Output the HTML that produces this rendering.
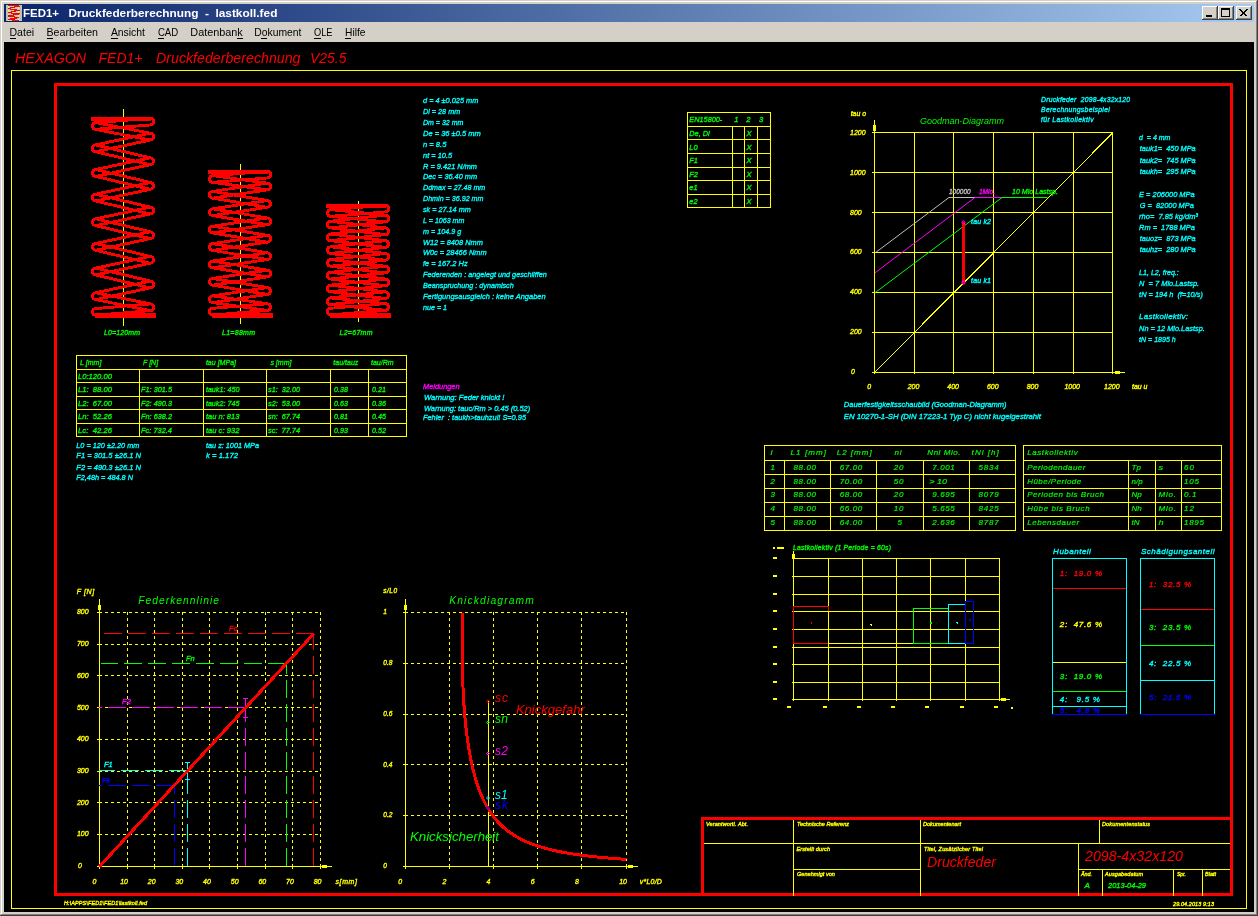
<!DOCTYPE html>
<html><head><meta charset="utf-8"><title>FED1+</title>
<style>
html,body{margin:0;padding:0;background:#d4d0c8;overflow:hidden}
svg{display:block;position:absolute;left:0;top:0;will-change:transform}
svg text{font-family:"Liberation Sans",sans-serif;font-style:italic;white-space:pre}
svg line,svg rect{shape-rendering:crispEdges}
</style></head><body>
<svg width="1258" height="916" viewBox="0 0 1258 916">
<rect x="0" y="0" width="1258" height="916" fill="#d4d0c8"/>
<rect x="1" y="1" width="1256" height="1" fill="#ffffff"/>
<rect x="1" y="1" width="1" height="913" fill="#ffffff"/>
<rect x="1256" y="1" width="1" height="914" fill="#808080"/>
<rect x="1" y="914" width="1256" height="1" fill="#808080"/>
<rect x="1257" y="0" width="1" height="916" fill="#404040"/>
<rect x="0" y="915" width="1258" height="1" fill="#404040"/>
<defs><linearGradient id="tg" x1="0" x2="1" y1="0" y2="0"><stop offset="0" stop-color="#0a246a"/><stop offset="1" stop-color="#a6caf0"/></linearGradient></defs>
<rect x="4" y="4" width="1250" height="18" fill="url(#tg)"/>
<rect x="6" y="5" width="16" height="16" fill="#c0c0c0"/>
<rect x="8" y="5" width="12" height="16" fill="#b0d0d8"/>
<rect x="8" y="5" width="11" height="1" fill="#ff0000"/>
<rect x="8" y="6" width="1" height="1" fill="#ffff00"/>
<rect x="13" y="6" width="1" height="1" fill="#ffff00"/>
<rect x="14" y="6" width="6" height="1" fill="#ff0000"/>
<rect x="8" y="7" width="1" height="1" fill="#ffff00"/>
<rect x="10" y="7" width="5" height="1" fill="#ff0000"/>
<rect x="18" y="7" width="1" height="1" fill="#ffff00"/>
<rect x="8" y="8" width="3" height="1" fill="#ff0000"/>
<rect x="13" y="8" width="1" height="1" fill="#ffff00"/>
<rect x="18" y="8" width="1" height="1" fill="#ffff00"/>
<rect x="10" y="9" width="7" height="1" fill="#ff0000"/>
<rect x="8" y="10" width="1" height="1" fill="#ffff00"/>
<rect x="13" y="10" width="1" height="1" fill="#ffff00"/>
<rect x="14" y="10" width="6" height="1" fill="#ff0000"/>
<rect x="8" y="11" width="1" height="1" fill="#ffff00"/>
<rect x="11" y="11" width="5" height="1" fill="#ff0000"/>
<rect x="18" y="11" width="1" height="1" fill="#ffff00"/>
<rect x="8" y="12" width="4" height="1" fill="#ff0000"/>
<rect x="13" y="12" width="1" height="1" fill="#ffff00"/>
<rect x="18" y="12" width="1" height="1" fill="#ffff00"/>
<rect x="11" y="13" width="9" height="1" fill="#ff0000"/>
<rect x="8" y="14" width="1" height="1" fill="#ffff00"/>
<rect x="13" y="14" width="6" height="1" fill="#ff0000"/>
<rect x="8" y="15" width="6" height="1" fill="#ff0000"/>
<rect x="18" y="15" width="1" height="1" fill="#ffff00"/>
<rect x="8" y="16" width="7" height="1" fill="#ff0000"/>
<rect x="18" y="16" width="1" height="1" fill="#ffff00"/>
<rect x="8" y="17" width="1" height="1" fill="#ffff00"/>
<rect x="13" y="17" width="1" height="1" fill="#ffff00"/>
<rect x="14" y="17" width="5" height="1" fill="#ff0000"/>
<rect x="10" y="18" width="7" height="1" fill="#ff0000"/>
<rect x="8" y="19" width="7" height="1" fill="#ff0000"/>
<rect x="18" y="19" width="1" height="1" fill="#ffff00"/>
<rect x="8" y="20" width="1" height="1" fill="#ffff00"/>
<rect x="12" y="20" width="7" height="1" fill="#ff0000"/>
<text x="23" y="17" fill="#ffffff" font-size="11" style="font-style:normal" font-weight="bold" textLength="36" lengthAdjust="spacingAndGlyphs" xml:space="preserve">FED1+</text>
<text x="68.4" y="17" fill="#ffffff" font-size="11" style="font-style:normal" font-weight="bold" textLength="130" lengthAdjust="spacingAndGlyphs" xml:space="preserve">Druckfederberechnung</text>
<text x="205" y="17" fill="#ffffff" font-size="11" style="font-style:normal" font-weight="bold" textLength="4" lengthAdjust="spacingAndGlyphs" xml:space="preserve">-</text>
<text x="215.4" y="17" fill="#ffffff" font-size="11" style="font-style:normal" font-weight="bold" textLength="62" lengthAdjust="spacingAndGlyphs" xml:space="preserve">lastkoll.fed</text>
<rect x="1202" y="6" width="16" height="14" fill="#404040"/>
<rect x="1202" y="6" width="15" height="13" fill="#ffffff"/>
<rect x="1203" y="7" width="14" height="12" fill="#808080"/>
<rect x="1203" y="7" width="13" height="11" fill="#d4d0c8"/>
<rect x="1218" y="6" width="16" height="14" fill="#404040"/>
<rect x="1218" y="6" width="15" height="13" fill="#ffffff"/>
<rect x="1219" y="7" width="14" height="12" fill="#808080"/>
<rect x="1219" y="7" width="13" height="11" fill="#d4d0c8"/>
<rect x="1236" y="6" width="16" height="14" fill="#404040"/>
<rect x="1236" y="6" width="15" height="13" fill="#ffffff"/>
<rect x="1237" y="7" width="14" height="12" fill="#808080"/>
<rect x="1237" y="7" width="13" height="11" fill="#d4d0c8"/>
<rect x="1206" y="15" width="6" height="2" fill="#000"/>
<rect x="1221.5" y="8.5" width="8" height="8" fill="none" stroke="#000" stroke-width="1"/>
<rect x="1221" y="8" width="9" height="2" fill="#000"/>
<path d="M1239.5 9.5 l7 7 M1240.5 9.5 l7 7 M1246.5 9.5 l-7 7 M1247.5 9.5 l-7 7" stroke="#000" stroke-width="1" fill="none" shape-rendering="crispEdges"/>
<text x="9.5" y="36" fill="#000000" font-size="11" style="font-style:normal" textLength="24.6" lengthAdjust="spacingAndGlyphs" xml:space="preserve">Datei</text>
<rect x="10" y="38" width="6" height="1" fill="#000"/>
<text x="46.5" y="36" fill="#000000" font-size="11" style="font-style:normal" textLength="51.5" lengthAdjust="spacingAndGlyphs" xml:space="preserve">Bearbeiten</text>
<rect x="47" y="38" width="6" height="1" fill="#000"/>
<text x="110.9" y="36" fill="#000000" font-size="11" style="font-style:normal" textLength="34.1" lengthAdjust="spacingAndGlyphs" xml:space="preserve">Ansicht</text>
<rect x="111" y="38" width="7" height="1" fill="#000"/>
<text x="157.9" y="36" fill="#000000" font-size="11" style="font-style:normal" textLength="20.3" lengthAdjust="spacingAndGlyphs" xml:space="preserve">CAD</text>
<rect x="158" y="38" width="6" height="1" fill="#000"/>
<text x="190.3" y="36" fill="#000000" font-size="11" style="font-style:normal" textLength="52.5" lengthAdjust="spacingAndGlyphs" xml:space="preserve">Datenbank</text>
<rect x="237" y="38" width="6" height="1" fill="#000"/>
<text x="254.3" y="36" fill="#000000" font-size="11" style="font-style:normal" textLength="47.2" lengthAdjust="spacingAndGlyphs" xml:space="preserve">Dokument</text>
<rect x="261" y="38" width="6" height="1" fill="#000"/>
<text x="314" y="36" fill="#000000" font-size="11" style="font-style:normal" textLength="18.5" lengthAdjust="spacingAndGlyphs" xml:space="preserve">OLE</text>
<rect x="314" y="38" width="7" height="1" fill="#000"/>
<text x="345" y="36" fill="#000000" font-size="11" style="font-style:normal" textLength="20.5" lengthAdjust="spacingAndGlyphs" xml:space="preserve">Hilfe</text>
<rect x="345" y="38" width="6" height="1" fill="#000"/>
<rect x="4" y="42" width="1250" height="870" fill="#000000"/>
<text x="15" y="63" fill="#ff0000" font-size="14" textLength="71" lengthAdjust="spacingAndGlyphs" xml:space="preserve">HEXAGON</text>
<text x="98.5" y="63" fill="#ff0000" font-size="14" textLength="44" lengthAdjust="spacingAndGlyphs" xml:space="preserve">FED1+</text>
<text x="156" y="63" fill="#ff0000" font-size="14" textLength="144.5" lengthAdjust="spacingAndGlyphs" xml:space="preserve">Druckfederberechnung</text>
<text x="310" y="63" fill="#ff0000" font-size="14" textLength="36.5" lengthAdjust="spacingAndGlyphs" xml:space="preserve">V25.5</text>
<rect x="11.5" y="70.5" width="1235" height="838" fill="none" stroke="#ffff00" stroke-width="1"/>
<rect x="55.5" y="84.5" width="1176" height="810" fill="none" stroke="#ff0000" stroke-width="3"/>
<text x="64" y="905" fill="#ffff00" font-size="5.5" textLength="83" lengthAdjust="spacing" stroke="#ffff00" stroke-width="0.35" xml:space="preserve">H:\APPS\FED1\FED1\lastkoll.fed</text>
<text x="1173" y="905.5" fill="#ffff00" font-size="5.5" textLength="41" lengthAdjust="spacing" stroke="#ffff00" stroke-width="0.35" xml:space="preserve">29.04.2013 9:13</text>
<line x1="123.5" y1="109" x2="123.5" y2="326" stroke="#ffff00" stroke-width="1"/>
<line x1="240.5" y1="164" x2="240.5" y2="324" stroke="#ffff00" stroke-width="1"/>
<line x1="358.5" y1="201" x2="358.5" y2="322" stroke="#ffff00" stroke-width="1"/>
<clipPath id="c123"><rect x="83" y="117" width="80" height="201.20000000000002"/></clipPath>
<g clip-path="url(#c123)"><path d="M149.93 118.28L95.53 122.68M150.47 124.92L96.07 129.32M96.44 122.73L150.84 133.35M95.16 129.27L149.56 139.89M149.50 133.37L95.10 145.08M150.90 139.88L96.50 151.59M96.57 145.10L150.97 158.02M95.03 151.58L149.43 164.50M149.50 158.01L95.10 169.72M150.90 164.52L96.50 176.23M96.57 169.74L150.97 182.66M95.03 176.22L149.43 189.14M149.50 182.65L95.10 194.37M150.90 189.16L96.50 200.88M96.57 194.38L150.97 207.31M95.03 200.86L149.43 213.78M149.50 207.29L95.10 219.01M150.90 213.80L96.50 225.52M96.57 219.02L150.97 231.95M95.03 225.50L149.43 238.43M149.50 231.93L95.10 243.65M150.90 238.44L96.50 250.16M96.57 243.66L150.97 256.59M95.03 250.14L149.43 263.07M149.50 256.57L95.10 268.29M150.90 263.08L96.50 274.80M96.57 268.31L150.97 281.23M95.03 274.78L149.43 287.71M149.50 281.21L95.10 292.93M150.90 287.72L96.50 299.44M96.47 292.92L150.87 304.04M95.13 299.45L149.53 310.56M149.92 303.98L95.52 308.58M150.48 310.62L96.08 315.22M150.33 118.27A3.33 3.33 0 0 1 150.47 124.92M95.53 122.68A3.33 3.33 0 0 0 95.16 129.27M150.84 133.35A3.33 3.33 0 0 1 150.90 139.88M95.10 145.08A3.33 3.33 0 0 0 95.03 151.58M150.97 158.02A3.33 3.33 0 0 1 150.90 164.52M95.10 169.72A3.33 3.33 0 0 0 95.03 176.22M150.97 182.66A3.33 3.33 0 0 1 150.90 189.16M95.10 194.37A3.33 3.33 0 0 0 95.03 200.86M150.97 207.31A3.33 3.33 0 0 1 150.90 213.80M95.10 219.01A3.33 3.33 0 0 0 95.03 225.50M150.97 231.95A3.33 3.33 0 0 1 150.90 238.44M95.10 243.65A3.33 3.33 0 0 0 95.03 250.14M150.97 256.59A3.33 3.33 0 0 1 150.90 263.08M95.10 268.29A3.33 3.33 0 0 0 95.03 274.78M150.97 281.23A3.33 3.33 0 0 1 150.90 287.72M95.10 292.93A3.33 3.33 0 0 0 95.13 299.45M150.87 304.04A3.33 3.33 0 0 1 150.48 310.62M95.52 308.58A3.33 3.33 0 0 0 95.59 315.22" fill="none" stroke="#ff0000" stroke-width="2.9" stroke-linecap="round" stroke-linejoin="round" shape-rendering="crispEdges"/>
<rect x="91" y="117" width="60" height="3.6" fill="#ff0000"/>
<rect x="95" y="313.0" width="61" height="5.2" fill="#ff0000"/>
</g>
<clipPath id="c240"><rect x="200" y="170" width="80" height="147.99999999999997"/></clipPath>
<g clip-path="url(#c240)"><path d="M266.93 171.28L212.53 175.68M267.47 177.92L213.07 182.32M213.26 175.70L267.66 183.21M212.34 182.30L266.74 189.80M266.70 183.21L212.30 191.49M267.70 189.80L213.30 198.07M213.35 191.50L267.75 200.63M212.25 198.07L266.65 207.20M266.70 200.62L212.30 208.90M267.70 207.21L213.30 215.49M213.35 208.91L267.75 218.04M212.25 215.48L266.65 224.61M266.70 218.03L212.30 226.31M267.70 224.62L213.30 232.90M213.35 226.32L267.75 235.45M212.25 232.89L266.65 242.02M266.70 235.44L212.30 243.72M267.70 242.03L213.30 250.31M213.35 243.73L267.75 252.86M212.25 250.30L266.65 259.43M266.70 252.86L212.30 261.13M267.70 259.44L213.30 267.72M213.35 261.14L267.75 270.27M212.25 267.71L266.65 276.84M266.70 270.27L212.30 278.54M267.70 276.85L213.30 285.13M213.35 278.55L267.75 287.68M212.25 285.12L266.65 294.25M266.70 287.68L212.30 295.96M267.70 294.26L213.30 302.54M213.28 295.95L267.68 303.80M212.32 302.54L266.72 310.40M266.92 303.78L212.52 308.38M267.48 310.42L213.08 315.02M267.33 171.27A3.33 3.33 0 0 1 267.47 177.92M212.53 175.68A3.33 3.33 0 0 0 212.34 182.30M267.66 183.21A3.33 3.33 0 0 1 267.70 189.80M212.30 191.49A3.33 3.33 0 0 0 212.25 198.07M267.75 200.63A3.33 3.33 0 0 1 267.70 207.21M212.30 208.90A3.33 3.33 0 0 0 212.25 215.48M267.75 218.04A3.33 3.33 0 0 1 267.70 224.62M212.30 226.31A3.33 3.33 0 0 0 212.25 232.89M267.75 235.45A3.33 3.33 0 0 1 267.70 242.03M212.30 243.72A3.33 3.33 0 0 0 212.25 250.30M267.75 252.86A3.33 3.33 0 0 1 267.70 259.44M212.30 261.13A3.33 3.33 0 0 0 212.25 267.71M267.75 270.27A3.33 3.33 0 0 1 267.70 276.85M212.30 278.54A3.33 3.33 0 0 0 212.25 285.12M267.75 287.68A3.33 3.33 0 0 1 267.70 294.26M212.30 295.96A3.33 3.33 0 0 0 212.32 302.54M267.68 303.80A3.33 3.33 0 0 1 267.48 310.42M212.52 308.38A3.33 3.33 0 0 0 212.59 315.02" fill="none" stroke="#ff0000" stroke-width="2.9" stroke-linecap="round" stroke-linejoin="round" shape-rendering="crispEdges"/>
<rect x="208" y="170" width="60" height="3.6" fill="#ff0000"/>
<rect x="212" y="312.79999999999995" width="61" height="5.2" fill="#ff0000"/>
</g>
<clipPath id="c358"><rect x="318" y="204" width="80" height="113.9"/></clipPath>
<g clip-path="url(#c358)"><path d="M384.93 205.28L330.53 209.68M385.47 211.92L331.07 216.32M331.14 209.69L385.54 215.19M330.46 216.31L384.86 221.82M384.83 215.20L330.43 221.27M385.57 221.82L331.17 227.89M331.21 221.28L385.61 227.98M330.39 227.89L384.79 234.59M384.83 227.97L330.43 234.05M385.57 234.59L331.17 240.67M331.21 234.05L385.61 240.75M330.39 240.66L384.79 247.36M384.83 240.75L330.43 246.82M385.57 247.37L331.17 253.44M331.21 246.83L385.61 253.53M330.39 253.44L384.79 260.14M384.83 253.53L330.43 259.60M385.57 260.14L331.17 266.22M331.21 259.60L385.61 266.31M330.39 266.21L384.79 272.92M384.83 266.30L330.43 272.38M385.57 272.92L331.17 279.00M331.21 272.38L385.61 279.08M330.39 278.99L384.79 285.69M384.83 279.08L330.43 285.15M385.57 285.70L331.17 291.77M331.21 285.16L385.61 291.86M330.39 291.77L384.79 298.47M384.83 291.85L330.43 297.93M385.57 298.47L331.17 304.55M331.15 297.93L385.55 303.69M330.45 304.55L384.85 310.31M384.92 303.68L330.52 308.28M385.48 310.32L331.08 314.92M385.33 205.27A3.33 3.33 0 0 1 385.47 211.92M330.53 209.68A3.33 3.33 0 0 0 330.46 216.31M385.54 215.19A3.33 3.33 0 0 1 385.57 221.82M330.43 221.27A3.33 3.33 0 0 0 330.39 227.89M385.61 227.98A3.33 3.33 0 0 1 385.57 234.59M330.43 234.05A3.33 3.33 0 0 0 330.39 240.66M385.61 240.75A3.33 3.33 0 0 1 385.57 247.37M330.43 246.82A3.33 3.33 0 0 0 330.39 253.44M385.61 253.53A3.33 3.33 0 0 1 385.57 260.14M330.43 259.60A3.33 3.33 0 0 0 330.39 266.21M385.61 266.31A3.33 3.33 0 0 1 385.57 272.92M330.43 272.38A3.33 3.33 0 0 0 330.39 278.99M385.61 279.08A3.33 3.33 0 0 1 385.57 285.70M330.43 285.15A3.33 3.33 0 0 0 330.39 291.77M385.61 291.86A3.33 3.33 0 0 1 385.57 298.47M330.43 297.93A3.33 3.33 0 0 0 330.45 304.55M385.55 303.69A3.33 3.33 0 0 1 385.48 310.32M330.52 308.28A3.33 3.33 0 0 0 330.59 314.92" fill="none" stroke="#ff0000" stroke-width="2.9" stroke-linecap="round" stroke-linejoin="round" shape-rendering="crispEdges"/>
<rect x="326" y="204" width="60" height="3.6" fill="#ff0000"/>
<rect x="330" y="312.7" width="61" height="5.2" fill="#ff0000"/>
</g>
<text x="104" y="334.5" fill="#00ff00" font-size="7" textLength="36" lengthAdjust="spacing" stroke="#00ff00" stroke-width="0.35" xml:space="preserve">L0=120mm</text>
<text x="222" y="334.5" fill="#00ff00" font-size="7" textLength="33" lengthAdjust="spacing" stroke="#00ff00" stroke-width="0.35" xml:space="preserve">L1=88mm</text>
<text x="339.5" y="334.5" fill="#00ff00" font-size="7" textLength="33" lengthAdjust="spacing" stroke="#00ff00" stroke-width="0.35" xml:space="preserve">L2=67mm</text>
<text x="423" y="103.3" fill="#00ffff" font-size="8" textLength="55.3" lengthAdjust="spacingAndGlyphs" stroke="#00ffff" stroke-width="0.35" xml:space="preserve">d = 4 ±0.025 mm</text>
<text x="423" y="114.2" fill="#00ffff" font-size="8" textLength="37.2" lengthAdjust="spacingAndGlyphs" stroke="#00ffff" stroke-width="0.35" xml:space="preserve">Di = 28 mm</text>
<text x="423" y="125.0" fill="#00ffff" font-size="8" textLength="40.4" lengthAdjust="spacingAndGlyphs" stroke="#00ffff" stroke-width="0.35" xml:space="preserve">Dm = 32 mm</text>
<text x="423" y="135.9" fill="#00ffff" font-size="8" textLength="57.8" lengthAdjust="spacingAndGlyphs" stroke="#00ffff" stroke-width="0.35" xml:space="preserve">De = 36 ±0.5 mm</text>
<text x="423" y="146.7" fill="#00ffff" font-size="8" textLength="23.4" lengthAdjust="spacingAndGlyphs" stroke="#00ffff" stroke-width="0.35" xml:space="preserve">n = 8.5</text>
<text x="423" y="157.6" fill="#00ffff" font-size="8" textLength="29.1" lengthAdjust="spacingAndGlyphs" stroke="#00ffff" stroke-width="0.35" xml:space="preserve">nt = 10.5</text>
<text x="423" y="168.5" fill="#00ffff" font-size="8" textLength="54" lengthAdjust="spacingAndGlyphs" stroke="#00ffff" stroke-width="0.35" xml:space="preserve">R = 9.421 N/mm</text>
<text x="423" y="179.3" fill="#00ffff" font-size="8" textLength="54" lengthAdjust="spacingAndGlyphs" stroke="#00ffff" stroke-width="0.35" xml:space="preserve">Dec = 36.40 mm</text>
<text x="423" y="190.2" fill="#00ffff" font-size="8" textLength="62.3" lengthAdjust="spacingAndGlyphs" stroke="#00ffff" stroke-width="0.35" xml:space="preserve">Ddmax = 27.48 mm</text>
<text x="423" y="201.0" fill="#00ffff" font-size="8" textLength="60.5" lengthAdjust="spacingAndGlyphs" stroke="#00ffff" stroke-width="0.35" xml:space="preserve">Dhmin = 36.92 mm</text>
<text x="423" y="211.9" fill="#00ffff" font-size="8" textLength="47.7" lengthAdjust="spacingAndGlyphs" stroke="#00ffff" stroke-width="0.35" xml:space="preserve">sk = 27.14 mm</text>
<text x="423" y="222.8" fill="#00ffff" font-size="8" textLength="41.4" lengthAdjust="spacingAndGlyphs" stroke="#00ffff" stroke-width="0.35" xml:space="preserve">L = 1063 mm</text>
<text x="423" y="233.6" fill="#00ffff" font-size="8" textLength="38.2" lengthAdjust="spacingAndGlyphs" stroke="#00ffff" stroke-width="0.35" xml:space="preserve">m = 104.9 g</text>
<text x="423" y="244.5" fill="#00ffff" font-size="8" textLength="59.8" lengthAdjust="spacingAndGlyphs" stroke="#00ffff" stroke-width="0.35" xml:space="preserve">W12 = 8408 Nmm</text>
<text x="423" y="255.3" fill="#00ffff" font-size="8" textLength="63.6" lengthAdjust="spacingAndGlyphs" stroke="#00ffff" stroke-width="0.35" xml:space="preserve">W0c = 28466 Nmm</text>
<text x="423" y="266.2" fill="#00ffff" font-size="8" textLength="44.7" lengthAdjust="spacingAndGlyphs" stroke="#00ffff" stroke-width="0.35" xml:space="preserve">fe = 167.2 Hz</text>
<text x="423" y="277.1" fill="#00ffff" font-size="8" textLength="123.8" lengthAdjust="spacingAndGlyphs" stroke="#00ffff" stroke-width="0.35" xml:space="preserve">Federenden : angelegt und geschliffen</text>
<text x="423" y="287.9" fill="#00ffff" font-size="8" textLength="90.7" lengthAdjust="spacingAndGlyphs" stroke="#00ffff" stroke-width="0.35" xml:space="preserve">Beanspruchung : dynamisch</text>
<text x="423" y="298.8" fill="#00ffff" font-size="8" textLength="122.6" lengthAdjust="spacingAndGlyphs" stroke="#00ffff" stroke-width="0.35" xml:space="preserve">Fertigungsausgleich : keine Angaben</text>
<text x="423" y="309.6" fill="#00ffff" font-size="8" textLength="24.1" lengthAdjust="spacingAndGlyphs" stroke="#00ffff" stroke-width="0.35" xml:space="preserve">nue = 1</text>
<line x1="687" y1="112.5" x2="771" y2="112.5" stroke="#ffff00" stroke-width="1"/>
<line x1="687" y1="126.5" x2="771" y2="126.5" stroke="#ffff00" stroke-width="1"/>
<line x1="687" y1="139.5" x2="771" y2="139.5" stroke="#ffff00" stroke-width="1"/>
<line x1="687" y1="153.5" x2="771" y2="153.5" stroke="#ffff00" stroke-width="1"/>
<line x1="687" y1="167.5" x2="771" y2="167.5" stroke="#ffff00" stroke-width="1"/>
<line x1="687" y1="180.5" x2="771" y2="180.5" stroke="#ffff00" stroke-width="1"/>
<line x1="687" y1="194.5" x2="771" y2="194.5" stroke="#ffff00" stroke-width="1"/>
<line x1="687" y1="207.5" x2="771" y2="207.5" stroke="#ffff00" stroke-width="1"/>
<line x1="687.5" y1="112" x2="687.5" y2="208" stroke="#ffff00" stroke-width="1"/>
<line x1="732.5" y1="126" x2="732.5" y2="208" stroke="#ffff00" stroke-width="1"/>
<line x1="744.5" y1="126" x2="744.5" y2="208" stroke="#ffff00" stroke-width="1"/>
<line x1="757.5" y1="126" x2="757.5" y2="208" stroke="#ffff00" stroke-width="1"/>
<line x1="770.5" y1="112" x2="770.5" y2="208" stroke="#ffff00" stroke-width="1"/>
<text x="689.3" y="122" fill="#00ff00" font-size="8" textLength="33" lengthAdjust="spacingAndGlyphs" stroke="#00ff00" stroke-width="0.35" xml:space="preserve">EN15800-</text>
<text x="734.2" y="122" fill="#00ff00" font-size="8" textLength="4.23" lengthAdjust="spacingAndGlyphs" stroke="#00ff00" stroke-width="0.35" xml:space="preserve">1</text>
<text x="746.2" y="122" fill="#00ff00" font-size="8" textLength="4.23" lengthAdjust="spacingAndGlyphs" stroke="#00ff00" stroke-width="0.35" xml:space="preserve">2</text>
<text x="759" y="122" fill="#00ff00" font-size="8" textLength="4.23" lengthAdjust="spacingAndGlyphs" stroke="#00ff00" stroke-width="0.35" xml:space="preserve">3</text>
<text x="689.3" y="135.6" fill="#00ff00" font-size="8" textLength="20.45" lengthAdjust="spacingAndGlyphs" stroke="#00ff00" stroke-width="0.35" xml:space="preserve">De, Di</text>
<text x="746.4" y="135.6" fill="#00ff00" font-size="8" textLength="5.07" lengthAdjust="spacingAndGlyphs" stroke="#00ff00" stroke-width="0.35" xml:space="preserve">X</text>
<text x="689.3" y="149.8" fill="#00ff00" font-size="8" textLength="8.19" lengthAdjust="spacingAndGlyphs" stroke="#00ff00" stroke-width="0.35" xml:space="preserve">L0</text>
<text x="746.4" y="149.8" fill="#00ff00" font-size="8" textLength="5.07" lengthAdjust="spacingAndGlyphs" stroke="#00ff00" stroke-width="0.35" xml:space="preserve">X</text>
<text x="689.3" y="162.9" fill="#00ff00" font-size="8" textLength="8.59" lengthAdjust="spacingAndGlyphs" stroke="#00ff00" stroke-width="0.35" xml:space="preserve">F1</text>
<text x="746.4" y="162.9" fill="#00ff00" font-size="8" textLength="5.07" lengthAdjust="spacingAndGlyphs" stroke="#00ff00" stroke-width="0.35" xml:space="preserve">X</text>
<text x="689.3" y="176.6" fill="#00ff00" font-size="8" textLength="8.59" lengthAdjust="spacingAndGlyphs" stroke="#00ff00" stroke-width="0.35" xml:space="preserve">F2</text>
<text x="746.4" y="176.6" fill="#00ff00" font-size="8" textLength="5.07" lengthAdjust="spacingAndGlyphs" stroke="#00ff00" stroke-width="0.35" xml:space="preserve">X</text>
<text x="689.3" y="189.7" fill="#00ff00" font-size="8" textLength="8.19" lengthAdjust="spacingAndGlyphs" stroke="#00ff00" stroke-width="0.35" xml:space="preserve">e1</text>
<text x="746.4" y="189.7" fill="#00ff00" font-size="8" textLength="5.07" lengthAdjust="spacingAndGlyphs" stroke="#00ff00" stroke-width="0.35" xml:space="preserve">X</text>
<text x="689.3" y="203.8" fill="#00ff00" font-size="8" textLength="8.19" lengthAdjust="spacingAndGlyphs" stroke="#00ff00" stroke-width="0.35" xml:space="preserve">e2</text>
<text x="746.4" y="203.8" fill="#00ff00" font-size="8" textLength="5.07" lengthAdjust="spacingAndGlyphs" stroke="#00ff00" stroke-width="0.35" xml:space="preserve">X</text>
<line x1="76" y1="355.5" x2="407" y2="355.5" stroke="#ffff00" stroke-width="1"/>
<line x1="76" y1="369.5" x2="407" y2="369.5" stroke="#ffff00" stroke-width="1"/>
<line x1="76" y1="382.5" x2="407" y2="382.5" stroke="#ffff00" stroke-width="1"/>
<line x1="76" y1="396.5" x2="407" y2="396.5" stroke="#ffff00" stroke-width="1"/>
<line x1="76" y1="409.5" x2="407" y2="409.5" stroke="#ffff00" stroke-width="1"/>
<line x1="76" y1="423.5" x2="407" y2="423.5" stroke="#ffff00" stroke-width="1"/>
<line x1="76" y1="436.5" x2="407" y2="436.5" stroke="#ffff00" stroke-width="1"/>
<line x1="76.5" y1="355" x2="76.5" y2="437" stroke="#ffff00" stroke-width="1"/>
<line x1="139.5" y1="369" x2="139.5" y2="437" stroke="#ffff00" stroke-width="1"/>
<line x1="203.5" y1="369" x2="203.5" y2="437" stroke="#ffff00" stroke-width="1"/>
<line x1="266.5" y1="369" x2="266.5" y2="437" stroke="#ffff00" stroke-width="1"/>
<line x1="330.5" y1="369" x2="330.5" y2="437" stroke="#ffff00" stroke-width="1"/>
<line x1="368.5" y1="369" x2="368.5" y2="437" stroke="#ffff00" stroke-width="1"/>
<line x1="406.5" y1="355" x2="406.5" y2="437" stroke="#ffff00" stroke-width="1"/>
<text x="80" y="365" fill="#00ff00" font-size="8" textLength="21.38" lengthAdjust="spacingAndGlyphs" stroke="#00ff00" stroke-width="0.35" xml:space="preserve">L [mm]</text>
<text x="143" y="365" fill="#00ff00" font-size="8" textLength="15.12" lengthAdjust="spacingAndGlyphs" stroke="#00ff00" stroke-width="0.35" xml:space="preserve">F [N]</text>
<text x="205.9" y="365" fill="#00ff00" font-size="8" textLength="30.13" lengthAdjust="spacingAndGlyphs" stroke="#00ff00" stroke-width="0.35" xml:space="preserve">tau [MPa]</text>
<text x="270.4" y="365" fill="#00ff00" font-size="8" textLength="21.12" lengthAdjust="spacingAndGlyphs" stroke="#00ff00" stroke-width="0.35" xml:space="preserve">s [mm]</text>
<text x="333.3" y="365" fill="#00ff00" font-size="8" textLength="25.05" lengthAdjust="spacingAndGlyphs" stroke="#00ff00" stroke-width="0.35" xml:space="preserve">tau/tauz</text>
<text x="371" y="365" fill="#00ff00" font-size="8" textLength="22.69" lengthAdjust="spacingAndGlyphs" stroke="#00ff00" stroke-width="0.35" xml:space="preserve">tau/Rm</text>
<text x="78" y="378.6" fill="#00ff00" font-size="8" textLength="34" lengthAdjust="spacingAndGlyphs" stroke="#00ff00" stroke-width="0.35" xml:space="preserve">L0:120.00</text>
<text x="78" y="391.9" fill="#00ff00" font-size="8" textLength="34" lengthAdjust="spacingAndGlyphs" stroke="#00ff00" stroke-width="0.35" xml:space="preserve">L1:  88.00</text>
<text x="141" y="391.9" fill="#00ff00" font-size="8" textLength="31" lengthAdjust="spacingAndGlyphs" stroke="#00ff00" stroke-width="0.35" xml:space="preserve">F1: 301.5</text>
<text x="205.9" y="391.9" fill="#00ff00" font-size="8" textLength="33.5" lengthAdjust="spacingAndGlyphs" stroke="#00ff00" stroke-width="0.35" xml:space="preserve">tauk1: 450</text>
<text x="268" y="391.9" fill="#00ff00" font-size="8" textLength="32" lengthAdjust="spacingAndGlyphs" stroke="#00ff00" stroke-width="0.35" xml:space="preserve">s1:  32.00</text>
<text x="333.9" y="391.9" fill="#00ff00" font-size="8" textLength="14" lengthAdjust="spacingAndGlyphs" stroke="#00ff00" stroke-width="0.35" xml:space="preserve">0.38</text>
<text x="372" y="391.9" fill="#00ff00" font-size="8" textLength="14" lengthAdjust="spacingAndGlyphs" stroke="#00ff00" stroke-width="0.35" xml:space="preserve">0.21</text>
<text x="78" y="405.8" fill="#00ff00" font-size="8" textLength="34" lengthAdjust="spacingAndGlyphs" stroke="#00ff00" stroke-width="0.35" xml:space="preserve">L2:  67.00</text>
<text x="141" y="405.8" fill="#00ff00" font-size="8" textLength="31" lengthAdjust="spacingAndGlyphs" stroke="#00ff00" stroke-width="0.35" xml:space="preserve">F2: 490.3</text>
<text x="205.9" y="405.8" fill="#00ff00" font-size="8" textLength="33.5" lengthAdjust="spacingAndGlyphs" stroke="#00ff00" stroke-width="0.35" xml:space="preserve">tauk2: 745</text>
<text x="268" y="405.8" fill="#00ff00" font-size="8" textLength="32" lengthAdjust="spacingAndGlyphs" stroke="#00ff00" stroke-width="0.35" xml:space="preserve">s2:  53.00</text>
<text x="333.9" y="405.8" fill="#00ff00" font-size="8" textLength="14" lengthAdjust="spacingAndGlyphs" stroke="#00ff00" stroke-width="0.35" xml:space="preserve">0.63</text>
<text x="372" y="405.8" fill="#00ff00" font-size="8" textLength="14" lengthAdjust="spacingAndGlyphs" stroke="#00ff00" stroke-width="0.35" xml:space="preserve">0.36</text>
<text x="78" y="419" fill="#00ff00" font-size="8" textLength="34" lengthAdjust="spacingAndGlyphs" stroke="#00ff00" stroke-width="0.35" xml:space="preserve">Ln:  52.26</text>
<text x="141" y="419" fill="#00ff00" font-size="8" textLength="31" lengthAdjust="spacingAndGlyphs" stroke="#00ff00" stroke-width="0.35" xml:space="preserve">Fn: 638.2</text>
<text x="205.9" y="419" fill="#00ff00" font-size="8" textLength="33.5" lengthAdjust="spacingAndGlyphs" stroke="#00ff00" stroke-width="0.35" xml:space="preserve">tau n: 813</text>
<text x="268" y="419" fill="#00ff00" font-size="8" textLength="32" lengthAdjust="spacingAndGlyphs" stroke="#00ff00" stroke-width="0.35" xml:space="preserve">sn:  67.74</text>
<text x="333.9" y="419" fill="#00ff00" font-size="8" textLength="14" lengthAdjust="spacingAndGlyphs" stroke="#00ff00" stroke-width="0.35" xml:space="preserve">0.81</text>
<text x="372" y="419" fill="#00ff00" font-size="8" textLength="14" lengthAdjust="spacingAndGlyphs" stroke="#00ff00" stroke-width="0.35" xml:space="preserve">0.45</text>
<text x="78" y="432.6" fill="#00ff00" font-size="8" textLength="34" lengthAdjust="spacingAndGlyphs" stroke="#00ff00" stroke-width="0.35" xml:space="preserve">Lc:  42.26</text>
<text x="141" y="432.6" fill="#00ff00" font-size="8" textLength="31" lengthAdjust="spacingAndGlyphs" stroke="#00ff00" stroke-width="0.35" xml:space="preserve">Fc: 732.4</text>
<text x="205.9" y="432.6" fill="#00ff00" font-size="8" textLength="33.5" lengthAdjust="spacingAndGlyphs" stroke="#00ff00" stroke-width="0.35" xml:space="preserve">tau c: 932</text>
<text x="268" y="432.6" fill="#00ff00" font-size="8" textLength="32" lengthAdjust="spacingAndGlyphs" stroke="#00ff00" stroke-width="0.35" xml:space="preserve">sc:  77.74</text>
<text x="333.9" y="432.6" fill="#00ff00" font-size="8" textLength="14" lengthAdjust="spacingAndGlyphs" stroke="#00ff00" stroke-width="0.35" xml:space="preserve">0.93</text>
<text x="372" y="432.6" fill="#00ff00" font-size="8" textLength="14" lengthAdjust="spacingAndGlyphs" stroke="#00ff00" stroke-width="0.35" xml:space="preserve">0.52</text>
<text x="76.3" y="447.5" fill="#00ffff" font-size="8" textLength="63" lengthAdjust="spacingAndGlyphs" stroke="#00ffff" stroke-width="0.35" xml:space="preserve">L0 = 120 ±2.20 mm</text>
<text x="76.3" y="458.3" fill="#00ffff" font-size="8" textLength="64.7" lengthAdjust="spacingAndGlyphs" stroke="#00ffff" stroke-width="0.35" xml:space="preserve">F1 = 301.5 ±26.1 N</text>
<text x="76.3" y="469.5" fill="#00ffff" font-size="8" textLength="64.7" lengthAdjust="spacingAndGlyphs" stroke="#00ffff" stroke-width="0.35" xml:space="preserve">F2 = 490.3 ±26.1 N</text>
<text x="76.3" y="480.4" fill="#00ffff" font-size="8" textLength="56.7" lengthAdjust="spacingAndGlyphs" stroke="#00ffff" stroke-width="0.35" xml:space="preserve">F2,48h = 484.8 N</text>
<text x="206" y="447.5" fill="#00ffff" font-size="8" textLength="53" lengthAdjust="spacingAndGlyphs" stroke="#00ffff" stroke-width="0.35" xml:space="preserve">tau z: 1001 MPa</text>
<text x="206" y="458.3" fill="#00ffff" font-size="8" textLength="32" lengthAdjust="spacingAndGlyphs" stroke="#00ffff" stroke-width="0.35" xml:space="preserve">k = 1.172</text>
<text x="423" y="388.7" fill="#ff00ff" font-size="8" textLength="36.6" lengthAdjust="spacingAndGlyphs" stroke="#ff00ff" stroke-width="0.35" xml:space="preserve">Meldungen</text>
<text x="423.9" y="399.7" fill="#00ffff" font-size="8" textLength="80.5" lengthAdjust="spacingAndGlyphs" stroke="#00ffff" stroke-width="0.35" xml:space="preserve">Warnung: Feder knickt !</text>
<text x="423.9" y="410.6" fill="#00ffff" font-size="8" textLength="106.3" lengthAdjust="spacingAndGlyphs" stroke="#00ffff" stroke-width="0.35" xml:space="preserve">Warnung: tauc/Rm &gt; 0.45 (0.52)</text>
<text x="423" y="420.4" fill="#00ffff" font-size="8" textLength="103" lengthAdjust="spacingAndGlyphs" stroke="#00ffff" stroke-width="0.35" xml:space="preserve">Fehler  : taukh&gt;tauhzul! S=0.95</text>
<line x1="764" y1="445.5" x2="1016" y2="445.5" stroke="#ffff00" stroke-width="1"/>
<line x1="764" y1="460.5" x2="1016" y2="460.5" stroke="#ffff00" stroke-width="1"/>
<line x1="764" y1="474.5" x2="1016" y2="474.5" stroke="#ffff00" stroke-width="1"/>
<line x1="764" y1="488.5" x2="1016" y2="488.5" stroke="#ffff00" stroke-width="1"/>
<line x1="764" y1="502.5" x2="1016" y2="502.5" stroke="#ffff00" stroke-width="1"/>
<line x1="764" y1="516.5" x2="1016" y2="516.5" stroke="#ffff00" stroke-width="1"/>
<line x1="764" y1="530.5" x2="1016" y2="530.5" stroke="#ffff00" stroke-width="1"/>
<line x1="764.5" y1="445" x2="764.5" y2="531" stroke="#ffff00" stroke-width="1"/>
<line x1="784.5" y1="460" x2="784.5" y2="531" stroke="#ffff00" stroke-width="1"/>
<line x1="830.5" y1="460" x2="830.5" y2="531" stroke="#ffff00" stroke-width="1"/>
<line x1="876.5" y1="460" x2="876.5" y2="531" stroke="#ffff00" stroke-width="1"/>
<line x1="923.5" y1="460" x2="923.5" y2="531" stroke="#ffff00" stroke-width="1"/>
<line x1="969.5" y1="460" x2="969.5" y2="531" stroke="#ffff00" stroke-width="1"/>
<line x1="1015.5" y1="445" x2="1015.5" y2="531" stroke="#ffff00" stroke-width="1"/>
<text x="770.4" y="455" fill="#00ff00" font-size="8" textLength="2" lengthAdjust="spacingAndGlyphs" stroke="#00ff00" stroke-width="0.2" xml:space="preserve">i</text>
<text x="790.5" y="455" fill="#00ff00" font-size="8" textLength="35.5" lengthAdjust="spacing" stroke="#00ff00" stroke-width="0.2" xml:space="preserve">L1 [mm]</text>
<text x="836.7" y="455" fill="#00ff00" font-size="8" textLength="35" lengthAdjust="spacing" stroke="#00ff00" stroke-width="0.2" xml:space="preserve">L2 [mm]</text>
<text x="894.5" y="455" fill="#00ff00" font-size="8" textLength="7" lengthAdjust="spacing" stroke="#00ff00" stroke-width="0.2" xml:space="preserve">ni</text>
<text x="927.3" y="455" fill="#00ff00" font-size="8" textLength="33.2" lengthAdjust="spacing" stroke="#00ff00" stroke-width="0.2" xml:space="preserve">Nni Mio.</text>
<text x="971.6" y="455" fill="#00ff00" font-size="8" textLength="27.2" lengthAdjust="spacing" stroke="#00ff00" stroke-width="0.2" xml:space="preserve">tNi [h]</text>
<text x="770.4" y="469.7" fill="#00ff00" font-size="8" stroke="#00ff00" stroke-width="0.2" xml:space="preserve">1</text>
<text x="793.5" y="469.7" fill="#00ff00" font-size="8" textLength="22.5" lengthAdjust="spacing" stroke="#00ff00" stroke-width="0.2" xml:space="preserve">88.00</text>
<text x="839.8" y="469.7" fill="#00ff00" font-size="8" textLength="22.5" lengthAdjust="spacing" stroke="#00ff00" stroke-width="0.2" xml:space="preserve">67.00</text>
<text x="893.8" y="469.7" fill="#00ff00" font-size="8" textLength="9.6" lengthAdjust="spacing" stroke="#00ff00" stroke-width="0.2" xml:space="preserve">20</text>
<text x="932.3" y="469.7" fill="#00ff00" font-size="8" textLength="22.4" lengthAdjust="spacing" stroke="#00ff00" stroke-width="0.2" xml:space="preserve">7.001</text>
<text x="978.6" y="469.7" fill="#00ff00" font-size="8" textLength="20" lengthAdjust="spacing" stroke="#00ff00" stroke-width="0.2" xml:space="preserve">5834</text>
<text x="770.4" y="483.6" fill="#00ff00" font-size="8" stroke="#00ff00" stroke-width="0.2" xml:space="preserve">2</text>
<text x="793.5" y="483.6" fill="#00ff00" font-size="8" textLength="22.5" lengthAdjust="spacing" stroke="#00ff00" stroke-width="0.2" xml:space="preserve">88.00</text>
<text x="839.8" y="483.6" fill="#00ff00" font-size="8" textLength="22.5" lengthAdjust="spacing" stroke="#00ff00" stroke-width="0.2" xml:space="preserve">70.00</text>
<text x="893.8" y="483.6" fill="#00ff00" font-size="8" textLength="9.6" lengthAdjust="spacing" stroke="#00ff00" stroke-width="0.2" xml:space="preserve">50</text>
<text x="929.2" y="483.6" fill="#00ff00" font-size="8" textLength="18" lengthAdjust="spacingAndGlyphs" stroke="#00ff00" stroke-width="0.2" xml:space="preserve">&gt; 10</text>
<text x="770.4" y="497" fill="#00ff00" font-size="8" stroke="#00ff00" stroke-width="0.2" xml:space="preserve">3</text>
<text x="793.5" y="497" fill="#00ff00" font-size="8" textLength="22.5" lengthAdjust="spacing" stroke="#00ff00" stroke-width="0.2" xml:space="preserve">88.00</text>
<text x="839.8" y="497" fill="#00ff00" font-size="8" textLength="22.5" lengthAdjust="spacing" stroke="#00ff00" stroke-width="0.2" xml:space="preserve">68.00</text>
<text x="893.8" y="497" fill="#00ff00" font-size="8" textLength="9.6" lengthAdjust="spacing" stroke="#00ff00" stroke-width="0.2" xml:space="preserve">20</text>
<text x="932.3" y="497" fill="#00ff00" font-size="8" textLength="22.4" lengthAdjust="spacing" stroke="#00ff00" stroke-width="0.2" xml:space="preserve">9.695</text>
<text x="978.6" y="497" fill="#00ff00" font-size="8" textLength="20" lengthAdjust="spacing" stroke="#00ff00" stroke-width="0.2" xml:space="preserve">8079</text>
<text x="770.4" y="511" fill="#00ff00" font-size="8" stroke="#00ff00" stroke-width="0.2" xml:space="preserve">4</text>
<text x="793.5" y="511" fill="#00ff00" font-size="8" textLength="22.5" lengthAdjust="spacing" stroke="#00ff00" stroke-width="0.2" xml:space="preserve">88.00</text>
<text x="839.8" y="511" fill="#00ff00" font-size="8" textLength="22.5" lengthAdjust="spacing" stroke="#00ff00" stroke-width="0.2" xml:space="preserve">66.00</text>
<text x="893.8" y="511" fill="#00ff00" font-size="8" textLength="9.6" lengthAdjust="spacing" stroke="#00ff00" stroke-width="0.2" xml:space="preserve">10</text>
<text x="932.3" y="511" fill="#00ff00" font-size="8" textLength="22.4" lengthAdjust="spacing" stroke="#00ff00" stroke-width="0.2" xml:space="preserve">5.655</text>
<text x="978.6" y="511" fill="#00ff00" font-size="8" textLength="20" lengthAdjust="spacing" stroke="#00ff00" stroke-width="0.2" xml:space="preserve">8425</text>
<text x="770.4" y="524.8" fill="#00ff00" font-size="8" stroke="#00ff00" stroke-width="0.2" xml:space="preserve">5</text>
<text x="793.5" y="524.8" fill="#00ff00" font-size="8" textLength="22.5" lengthAdjust="spacing" stroke="#00ff00" stroke-width="0.2" xml:space="preserve">88.00</text>
<text x="839.8" y="524.8" fill="#00ff00" font-size="8" textLength="22.5" lengthAdjust="spacing" stroke="#00ff00" stroke-width="0.2" xml:space="preserve">64.00</text>
<text x="897.6" y="524.8" fill="#00ff00" font-size="8" stroke="#00ff00" stroke-width="0.2" xml:space="preserve">5</text>
<text x="932.3" y="524.8" fill="#00ff00" font-size="8" textLength="22.4" lengthAdjust="spacing" stroke="#00ff00" stroke-width="0.2" xml:space="preserve">2.636</text>
<text x="978.6" y="524.8" fill="#00ff00" font-size="8" textLength="20" lengthAdjust="spacing" stroke="#00ff00" stroke-width="0.2" xml:space="preserve">8787</text>
<line x1="1023" y1="445.5" x2="1222" y2="445.5" stroke="#ffff00" stroke-width="1"/>
<line x1="1023" y1="460.5" x2="1222" y2="460.5" stroke="#ffff00" stroke-width="1"/>
<line x1="1023" y1="474.5" x2="1222" y2="474.5" stroke="#ffff00" stroke-width="1"/>
<line x1="1023" y1="488.5" x2="1222" y2="488.5" stroke="#ffff00" stroke-width="1"/>
<line x1="1023" y1="502.5" x2="1222" y2="502.5" stroke="#ffff00" stroke-width="1"/>
<line x1="1023" y1="516.5" x2="1222" y2="516.5" stroke="#ffff00" stroke-width="1"/>
<line x1="1023" y1="530.5" x2="1222" y2="530.5" stroke="#ffff00" stroke-width="1"/>
<line x1="1023.5" y1="445" x2="1023.5" y2="531" stroke="#ffff00" stroke-width="1"/>
<line x1="1128.5" y1="460" x2="1128.5" y2="531" stroke="#ffff00" stroke-width="1"/>
<line x1="1155.5" y1="460" x2="1155.5" y2="531" stroke="#ffff00" stroke-width="1"/>
<line x1="1181.5" y1="460" x2="1181.5" y2="531" stroke="#ffff00" stroke-width="1"/>
<line x1="1221.5" y1="445" x2="1221.5" y2="531" stroke="#ffff00" stroke-width="1"/>
<text x="1027.2" y="455" fill="#00ff00" font-size="8" textLength="50.5" lengthAdjust="spacing" stroke="#00ff00" stroke-width="0.2" xml:space="preserve">Lastkollektiv</text>
<text x="1027.2" y="469.7" fill="#00ff00" font-size="8" textLength="58.2" lengthAdjust="spacing" stroke="#00ff00" stroke-width="0.2" xml:space="preserve">Periodendauer</text>
<text x="1131.6" y="469.7" fill="#00ff00" font-size="8" textLength="9.34" lengthAdjust="spacingAndGlyphs" stroke="#00ff00" stroke-width="0.2" xml:space="preserve">Tp</text>
<text x="1158.6" y="469.7" fill="#00ff00" font-size="8" textLength="4.6" lengthAdjust="spacingAndGlyphs" stroke="#00ff00" stroke-width="0.2" xml:space="preserve">s</text>
<text x="1184" y="469.7" fill="#00ff00" font-size="8" textLength="9.97" lengthAdjust="spacing" stroke="#00ff00" stroke-width="0.2" xml:space="preserve">60</text>
<text x="1027.2" y="483.6" fill="#00ff00" font-size="8" textLength="54" lengthAdjust="spacing" stroke="#00ff00" stroke-width="0.2" xml:space="preserve">Hübe/Periode</text>
<text x="1131.6" y="483.6" fill="#00ff00" font-size="8" textLength="11.12" lengthAdjust="spacingAndGlyphs" stroke="#00ff00" stroke-width="0.2" xml:space="preserve">n/p</text>
<text x="1184" y="483.6" fill="#00ff00" font-size="8" textLength="14.95" lengthAdjust="spacing" stroke="#00ff00" stroke-width="0.2" xml:space="preserve">105</text>
<text x="1027.2" y="497" fill="#00ff00" font-size="8" textLength="76.7" lengthAdjust="spacing" stroke="#00ff00" stroke-width="0.2" xml:space="preserve">Perioden bis Bruch</text>
<text x="1131.6" y="497" fill="#00ff00" font-size="8" textLength="10.23" lengthAdjust="spacingAndGlyphs" stroke="#00ff00" stroke-width="0.2" xml:space="preserve">Np</text>
<text x="1158.6" y="497" fill="#00ff00" font-size="8" textLength="17.38" lengthAdjust="spacing" stroke="#00ff00" stroke-width="0.2" xml:space="preserve">Mio.</text>
<text x="1184" y="497" fill="#00ff00" font-size="8" textLength="12.45" lengthAdjust="spacing" stroke="#00ff00" stroke-width="0.2" xml:space="preserve">0.1</text>
<text x="1027.2" y="511" fill="#00ff00" font-size="8" textLength="62.4" lengthAdjust="spacing" stroke="#00ff00" stroke-width="0.2" xml:space="preserve">Hübe bis Bruch</text>
<text x="1131.6" y="511" fill="#00ff00" font-size="8" textLength="10.23" lengthAdjust="spacingAndGlyphs" stroke="#00ff00" stroke-width="0.2" xml:space="preserve">Nh</text>
<text x="1158.6" y="511" fill="#00ff00" font-size="8" textLength="17.38" lengthAdjust="spacing" stroke="#00ff00" stroke-width="0.2" xml:space="preserve">Mio.</text>
<text x="1184" y="511" fill="#00ff00" font-size="8" textLength="9.97" lengthAdjust="spacing" stroke="#00ff00" stroke-width="0.2" xml:space="preserve">12</text>
<text x="1027.2" y="524.8" fill="#00ff00" font-size="8" textLength="52" lengthAdjust="spacing" stroke="#00ff00" stroke-width="0.2" xml:space="preserve">Lebensdauer</text>
<text x="1131.6" y="524.8" fill="#00ff00" font-size="8" textLength="8.0" lengthAdjust="spacingAndGlyphs" stroke="#00ff00" stroke-width="0.2" xml:space="preserve">tN</text>
<text x="1158.6" y="524.8" fill="#00ff00" font-size="8" textLength="5.12" lengthAdjust="spacingAndGlyphs" stroke="#00ff00" stroke-width="0.2" xml:space="preserve">h</text>
<text x="1184" y="524.8" fill="#00ff00" font-size="8" textLength="19.93" lengthAdjust="spacing" stroke="#00ff00" stroke-width="0.2" xml:space="preserve">1895</text>
<line x1="872" y1="132.5" x2="1113" y2="132.5" stroke="#ffff00" stroke-width="1"/>
<line x1="872" y1="172.5" x2="1113" y2="172.5" stroke="#ffff00" stroke-width="1"/>
<line x1="872" y1="212.5" x2="1113" y2="212.5" stroke="#ffff00" stroke-width="1"/>
<line x1="872" y1="252.5" x2="1113" y2="252.5" stroke="#ffff00" stroke-width="1"/>
<line x1="872" y1="292.5" x2="1113" y2="292.5" stroke="#ffff00" stroke-width="1"/>
<line x1="872" y1="332.5" x2="1113" y2="332.5" stroke="#ffff00" stroke-width="1"/>
<line x1="872" y1="372.5" x2="1113" y2="372.5" stroke="#ffff00" stroke-width="1"/>
<line x1="874.5" y1="132" x2="874.5" y2="374" stroke="#ffff00" stroke-width="1"/>
<line x1="914.5" y1="132" x2="914.5" y2="374" stroke="#ffff00" stroke-width="1"/>
<line x1="953.5" y1="132" x2="953.5" y2="374" stroke="#ffff00" stroke-width="1"/>
<line x1="993.5" y1="132" x2="993.5" y2="374" stroke="#ffff00" stroke-width="1"/>
<line x1="1033.5" y1="132" x2="1033.5" y2="374" stroke="#ffff00" stroke-width="1"/>
<line x1="1073.5" y1="132" x2="1073.5" y2="374" stroke="#ffff00" stroke-width="1"/>
<line x1="1112.5" y1="132" x2="1112.5" y2="374" stroke="#ffff00" stroke-width="1"/>
<line x1="874.5" y1="120" x2="874.5" y2="132" stroke="#ffff00" stroke-width="1"/>
<rect x="873" y="125" width="3" height="6" fill="#ffff00"/>
<line x1="1112" y1="372.5" x2="1125" y2="372.5" stroke="#ffff00" stroke-width="1"/>
<rect x="1115" y="371" width="5" height="3" fill="#ffff00"/>
<line x1="874.5" y1="372.5" x2="1112.8" y2="132.8" stroke="#ffff00" stroke-width="1" shape-rendering="geometricPrecision"/>
<polyline points="874.8,253.1 949,197.5 975,197.5" fill="none" stroke="#c0c0c0" stroke-width="1"/>
<polyline points="874.8,273 975,197.5 1002,197.5" fill="none" stroke="#ff00ff" stroke-width="1"/>
<polyline points="874.8,292.9 1002,197.5 1047.5,197.5" fill="none" stroke="#00ff00" stroke-width="1"/>
<rect x="962" y="222" width="3" height="61.5" fill="#ff0000"/>
<circle cx="963.5" cy="222.5" r="1.6" fill="none" stroke="#ff00ff" stroke-width="1"/>
<circle cx="963.5" cy="282.5" r="1.6" fill="none" stroke="#ff00ff" stroke-width="1"/>
<text x="971" y="223.7" fill="#00ffff" font-size="7" textLength="20" lengthAdjust="spacing" stroke="#00ffff" stroke-width="0.35" xml:space="preserve">tau k2</text>
<text x="971" y="282.5" fill="#00ffff" font-size="7" textLength="20" lengthAdjust="spacing" stroke="#00ffff" stroke-width="0.35" xml:space="preserve">tau k1</text>
<text x="949" y="194" fill="#c0c0c0" font-size="7.5" textLength="21.6" lengthAdjust="spacingAndGlyphs" stroke="#c0c0c0" stroke-width="0.35" xml:space="preserve">100000</text>
<text x="978.9" y="194" fill="#ff00ff" font-size="7.5" textLength="16.2" lengthAdjust="spacingAndGlyphs" stroke="#ff00ff" stroke-width="0.35" xml:space="preserve">1Mio.</text>
<text x="1012" y="194" fill="#00ff00" font-size="7.5" textLength="46" lengthAdjust="spacingAndGlyphs" stroke="#00ff00" stroke-width="0.35" xml:space="preserve">10 Mio Lastsp.</text>
<text x="920" y="123.8" fill="#00ff00" font-size="9.5" textLength="84" lengthAdjust="spacingAndGlyphs" xml:space="preserve">Goodman-Diagramm</text>
<text x="850.7" y="115.7" fill="#ffff00" font-size="7" textLength="15.5" lengthAdjust="spacingAndGlyphs" stroke="#ffff00" stroke-width="0.35" xml:space="preserve">tau o</text>
<text x="1132" y="388.7" fill="#ffff00" font-size="7" textLength="15.5" lengthAdjust="spacingAndGlyphs" stroke="#ffff00" stroke-width="0.35" xml:space="preserve">tau u</text>
<text x="850" y="134.7" fill="#ffff00" font-size="7" textLength="15.57" lengthAdjust="spacingAndGlyphs" stroke="#ffff00" stroke-width="0.35" xml:space="preserve">1200</text>
<text x="850" y="174.6" fill="#ffff00" font-size="7" textLength="15.57" lengthAdjust="spacingAndGlyphs" stroke="#ffff00" stroke-width="0.35" xml:space="preserve">1000</text>
<text x="850" y="214.5" fill="#ffff00" font-size="7" textLength="11.68" lengthAdjust="spacingAndGlyphs" stroke="#ffff00" stroke-width="0.35" xml:space="preserve">800</text>
<text x="850" y="254.4" fill="#ffff00" font-size="7" textLength="11.68" lengthAdjust="spacingAndGlyphs" stroke="#ffff00" stroke-width="0.35" xml:space="preserve">600</text>
<text x="850" y="294.3" fill="#ffff00" font-size="7" textLength="11.68" lengthAdjust="spacingAndGlyphs" stroke="#ffff00" stroke-width="0.35" xml:space="preserve">400</text>
<text x="850" y="334.2" fill="#ffff00" font-size="7" textLength="11.68" lengthAdjust="spacingAndGlyphs" stroke="#ffff00" stroke-width="0.35" xml:space="preserve">200</text>
<text x="851" y="374.1" fill="#ffff00" font-size="7" textLength="3.89" lengthAdjust="spacingAndGlyphs" stroke="#ffff00" stroke-width="0.35" xml:space="preserve">0</text>
<text x="867.2" y="388.7" fill="#ffff00" font-size="7" textLength="3.89" lengthAdjust="spacingAndGlyphs" stroke="#ffff00" stroke-width="0.35" xml:space="preserve">0</text>
<text x="907.66" y="388.7" fill="#ffff00" font-size="7" textLength="11.68" lengthAdjust="spacingAndGlyphs" stroke="#ffff00" stroke-width="0.35" xml:space="preserve">200</text>
<text x="947.26" y="388.7" fill="#ffff00" font-size="7" textLength="11.68" lengthAdjust="spacingAndGlyphs" stroke="#ffff00" stroke-width="0.35" xml:space="preserve">400</text>
<text x="986.96" y="388.7" fill="#ffff00" font-size="7" textLength="11.68" lengthAdjust="spacingAndGlyphs" stroke="#ffff00" stroke-width="0.35" xml:space="preserve">600</text>
<text x="1026.66" y="388.7" fill="#ffff00" font-size="7" textLength="11.68" lengthAdjust="spacingAndGlyphs" stroke="#ffff00" stroke-width="0.35" xml:space="preserve">800</text>
<text x="1064.41" y="388.7" fill="#ffff00" font-size="7" textLength="15.57" lengthAdjust="spacingAndGlyphs" stroke="#ffff00" stroke-width="0.35" xml:space="preserve">1000</text>
<text x="1104.01" y="388.7" fill="#ffff00" font-size="7" textLength="15.57" lengthAdjust="spacingAndGlyphs" stroke="#ffff00" stroke-width="0.35" xml:space="preserve">1200</text>
<text x="843.8" y="407.3" fill="#00ffff" font-size="8" textLength="162.8" lengthAdjust="spacingAndGlyphs" stroke="#00ffff" stroke-width="0.35" xml:space="preserve">Dauerfestigkeitsschaubild (Goodman-Diagramm)</text>
<text x="843.8" y="418.7" fill="#00ffff" font-size="8" textLength="197.2" lengthAdjust="spacingAndGlyphs" stroke="#00ffff" stroke-width="0.35" xml:space="preserve">EN 10270-1-SH (DIN 17223-1 Typ C) nicht kugelgestrahlt</text>
<text x="1041.1" y="101.7" fill="#00ffff" font-size="6.8" textLength="89" lengthAdjust="spacing" stroke="#00ffff" stroke-width="0.35" xml:space="preserve">Druckfeder  2098-4x32x120</text>
<text x="1041.1" y="111.9" fill="#00ffff" font-size="6.8" textLength="68.7" lengthAdjust="spacing" stroke="#00ffff" stroke-width="0.35" xml:space="preserve">Berechnungsbeispiel</text>
<text x="1041.1" y="121.9" fill="#00ffff" font-size="6.8" textLength="52.5" lengthAdjust="spacing" stroke="#00ffff" stroke-width="0.35" xml:space="preserve">für Lastkollektiv</text>
<text x="1139.1" y="139.7" fill="#00ffff" font-size="8" textLength="31.3" lengthAdjust="spacingAndGlyphs" stroke="#00ffff" stroke-width="0.35" xml:space="preserve">d  = 4 mm</text>
<text x="1139.8" y="150.7" fill="#00ffff" font-size="8" textLength="55.9" lengthAdjust="spacingAndGlyphs" stroke="#00ffff" stroke-width="0.35" xml:space="preserve">tauk1=  450 MPa</text>
<text x="1139.8" y="162.7" fill="#00ffff" font-size="8" textLength="55.9" lengthAdjust="spacingAndGlyphs" stroke="#00ffff" stroke-width="0.35" xml:space="preserve">tauk2=  745 MPa</text>
<text x="1139.8" y="173.5" fill="#00ffff" font-size="8" textLength="55.9" lengthAdjust="spacingAndGlyphs" stroke="#00ffff" stroke-width="0.35" xml:space="preserve">taukh=  295 MPa</text>
<text x="1139.1" y="196.7" fill="#00ffff" font-size="8" textLength="55.5" lengthAdjust="spacingAndGlyphs" stroke="#00ffff" stroke-width="0.35" xml:space="preserve">E = 206000 MPa</text>
<text x="1139.8" y="207.8" fill="#00ffff" font-size="8" textLength="54" lengthAdjust="spacingAndGlyphs" stroke="#00ffff" stroke-width="0.35" xml:space="preserve">G =  82000 MPa</text>
<text x="1139.1" y="218.6" fill="#00ffff" font-size="8" textLength="58.8" lengthAdjust="spacingAndGlyphs" stroke="#00ffff" stroke-width="0.35" xml:space="preserve">rho=  7.85 kg/dm³</text>
<text x="1139.1" y="229.5" fill="#00ffff" font-size="8" textLength="55.7" lengthAdjust="spacingAndGlyphs" stroke="#00ffff" stroke-width="0.35" xml:space="preserve">Rm =  1788 MPa</text>
<text x="1139.8" y="241.2" fill="#00ffff" font-size="8" textLength="55.9" lengthAdjust="spacingAndGlyphs" stroke="#00ffff" stroke-width="0.35" xml:space="preserve">tauoz=  873 MPa</text>
<text x="1139.8" y="252.3" fill="#00ffff" font-size="8" textLength="55.9" lengthAdjust="spacingAndGlyphs" stroke="#00ffff" stroke-width="0.35" xml:space="preserve">tauhz=  280 MPa</text>
<text x="1139.1" y="274.8" fill="#00ffff" font-size="8" textLength="39.7" lengthAdjust="spacingAndGlyphs" stroke="#00ffff" stroke-width="0.35" xml:space="preserve">L1, L2, freq.:</text>
<text x="1139.1" y="285.9" fill="#00ffff" font-size="8" textLength="60.1" lengthAdjust="spacingAndGlyphs" stroke="#00ffff" stroke-width="0.35" xml:space="preserve">N  = 7 Mio.Lastsp.</text>
<text x="1139.1" y="297" fill="#00ffff" font-size="8" textLength="63.8" lengthAdjust="spacingAndGlyphs" stroke="#00ffff" stroke-width="0.35" xml:space="preserve">tN = 194 h  (f=10/s)</text>
<text x="1139.1" y="319.3" fill="#00ffff" font-size="8" textLength="48.9" lengthAdjust="spacing" stroke="#00ffff" stroke-width="0.35" xml:space="preserve">Lastkollektiv:</text>
<text x="1139.1" y="331.2" fill="#00ffff" font-size="8" textLength="65.7" lengthAdjust="spacingAndGlyphs" stroke="#00ffff" stroke-width="0.35" xml:space="preserve">Nn = 12 Mio.Lastsp.</text>
<text x="1139.1" y="342" fill="#00ffff" font-size="8" textLength="36.7" lengthAdjust="spacingAndGlyphs" stroke="#00ffff" stroke-width="0.35" xml:space="preserve">tN = 1895 h</text>
<line x1="792" y1="558.5" x2="1000" y2="558.5" stroke="#ffff00" stroke-width="1"/>
<line x1="792" y1="576.5" x2="1000" y2="576.5" stroke="#ffff00" stroke-width="1"/>
<line x1="792" y1="594.5" x2="1000" y2="594.5" stroke="#ffff00" stroke-width="1"/>
<line x1="792" y1="611.5" x2="1000" y2="611.5" stroke="#ffff00" stroke-width="1"/>
<line x1="792" y1="629.5" x2="1000" y2="629.5" stroke="#ffff00" stroke-width="1"/>
<line x1="792" y1="647.5" x2="1000" y2="647.5" stroke="#ffff00" stroke-width="1"/>
<line x1="792" y1="664.5" x2="1000" y2="664.5" stroke="#ffff00" stroke-width="1"/>
<line x1="792" y1="682.5" x2="1000" y2="682.5" stroke="#ffff00" stroke-width="1"/>
<line x1="792" y1="699.5" x2="1000" y2="699.5" stroke="#ffff00" stroke-width="1"/>
<line x1="793.5" y1="558" x2="793.5" y2="701" stroke="#ffff00" stroke-width="1"/>
<line x1="828.5" y1="558" x2="828.5" y2="701" stroke="#ffff00" stroke-width="1"/>
<line x1="862.5" y1="558" x2="862.5" y2="701" stroke="#ffff00" stroke-width="1"/>
<line x1="896.5" y1="558" x2="896.5" y2="701" stroke="#ffff00" stroke-width="1"/>
<line x1="930.5" y1="558" x2="930.5" y2="701" stroke="#ffff00" stroke-width="1"/>
<line x1="965.5" y1="558" x2="965.5" y2="701" stroke="#ffff00" stroke-width="1"/>
<line x1="999.5" y1="558" x2="999.5" y2="701" stroke="#ffff00" stroke-width="1"/>
<line x1="793.5" y1="551" x2="793.5" y2="558" stroke="#ffff00" stroke-width="1"/>
<rect x="792" y="554" width="3" height="5" fill="#ffff00"/>
<line x1="999" y1="699.5" x2="1010" y2="699.5" stroke="#ffff00" stroke-width="1"/>
<rect x="1001" y="698" width="5" height="3" fill="#ffff00"/>
<rect x="793.5" y="606.5" width="35" height="37" fill="none" stroke="#ff0000" stroke-width="1"/>
<rect x="828.5" y="611.5" width="85" height="32" fill="none" stroke="#ffff00" stroke-width="1"/>
<rect x="913.5" y="608.5" width="35" height="35" fill="none" stroke="#00ff00" stroke-width="1"/>
<rect x="948.5" y="604.5" width="17" height="39" fill="none" stroke="#00ffff" stroke-width="1"/>
<rect x="965.5" y="601.5" width="8" height="42" fill="none" stroke="#0000ff" stroke-width="1"/>
<rect x="811" y="622" width="1" height="2" fill="#ff0000"/>
<rect x="870" y="624" width="2" height="1" fill="#ffff00"/>
<rect x="871" y="625" width="1" height="1" fill="#ffff00"/>
<rect x="930" y="622" width="2" height="2" fill="#00ff00"/>
<rect x="956" y="622" width="2" height="1" fill="#00ffff"/>
<rect x="957" y="623" width="1" height="1" fill="#00ffff"/>
<rect x="969" y="619" width="2" height="2" fill="#0000ff"/>
<rect x="773" y="557" width="4" height="2" fill="#ffff00"/>
<rect x="773" y="575" width="4" height="2" fill="#ffff00"/>
<rect x="773" y="593" width="4" height="2" fill="#ffff00"/>
<rect x="773" y="610" width="4" height="2" fill="#ffff00"/>
<rect x="773" y="628" width="4" height="2" fill="#ffff00"/>
<rect x="773" y="646" width="4" height="2" fill="#ffff00"/>
<rect x="773" y="663" width="4" height="2" fill="#ffff00"/>
<rect x="773" y="681" width="4" height="2" fill="#ffff00"/>
<rect x="773" y="698" width="4" height="2" fill="#ffff00"/>
<rect x="773" y="547" width="2" height="2" fill="#ffff00"/>
<rect x="777" y="547" width="7" height="2" fill="#ffff00"/>
<rect x="787" y="706" width="4" height="2" fill="#ffff00"/>
<rect x="823" y="706" width="4" height="2" fill="#ffff00"/>
<rect x="857" y="706" width="4" height="2" fill="#ffff00"/>
<rect x="891" y="706" width="4" height="2" fill="#ffff00"/>
<rect x="925" y="706" width="4" height="2" fill="#ffff00"/>
<rect x="960" y="706" width="4" height="2" fill="#ffff00"/>
<rect x="994" y="706" width="4" height="2" fill="#ffff00"/>
<rect x="1011" y="707" width="2" height="2" fill="#ffff00"/>
<text x="792.9" y="549.8" fill="#00ff00" font-size="6.8" textLength="98" lengthAdjust="spacing" stroke="#00ff00" stroke-width="0.35" xml:space="preserve">Lastkollektiv (1 Periode = 60s)</text>
<rect x="1052.5" y="558.5" width="74" height="156" fill="none" stroke="#00ffff" stroke-width="1"/>
<line x1="1053" y1="588.5" x2="1126" y2="588.5" stroke="#ff0000" stroke-width="1"/>
<line x1="1053" y1="662.5" x2="1126" y2="662.5" stroke="#ffff00" stroke-width="1"/>
<line x1="1053" y1="691.5" x2="1126" y2="691.5" stroke="#00ff00" stroke-width="1"/>
<line x1="1053" y1="706.5" x2="1126" y2="706.5" stroke="#00ffff" stroke-width="1"/>
<line x1="1052" y1="714.5" x2="1127" y2="714.5" stroke="#0000ff" stroke-width="1"/>
<rect x="1140.5" y="558.5" width="74" height="156" fill="none" stroke="#00ffff" stroke-width="1"/>
<line x1="1141" y1="609.5" x2="1214" y2="609.5" stroke="#ff0000" stroke-width="1"/>
<line x1="1141" y1="645.5" x2="1214" y2="645.5" stroke="#00ff00" stroke-width="1"/>
<line x1="1141" y1="680.5" x2="1214" y2="680.5" stroke="#00ffff" stroke-width="1"/>
<line x1="1140" y1="714.5" x2="1215" y2="714.5" stroke="#0000ff" stroke-width="1"/>
<text x="1053.1" y="553.7" fill="#00ffff" font-size="8" textLength="37.8" lengthAdjust="spacing" stroke="#00ffff" stroke-width="0.35" xml:space="preserve">Hubanteil</text>
<text x="1141" y="553.7" fill="#00ffff" font-size="8" textLength="73.6" lengthAdjust="spacing" stroke="#00ffff" stroke-width="0.35" xml:space="preserve">Schädigungsanteil</text>
<text x="1059.8" y="575.8" fill="#ff0000" font-size="8" textLength="42.2" lengthAdjust="spacing" stroke="#ff0000" stroke-width="0.35" xml:space="preserve">1:  19.0 %</text>
<text x="1059.8" y="627.4" fill="#ffff00" font-size="8" textLength="42.2" lengthAdjust="spacing" stroke="#ffff00" stroke-width="0.35" xml:space="preserve">2:  47.6 %</text>
<text x="1059.8" y="679.3" fill="#00ff00" font-size="8" textLength="42.2" lengthAdjust="spacing" stroke="#00ff00" stroke-width="0.35" xml:space="preserve">3:  19.0 %</text>
<text x="1059.8" y="701.5" fill="#00ffff" font-size="8" textLength="40" lengthAdjust="spacing" stroke="#00ffff" stroke-width="0.35" xml:space="preserve">4:   9.5 %</text>
<text x="1059.8" y="712.6" fill="#0000ff" font-size="8" textLength="40" lengthAdjust="spacing" stroke="#0000ff" stroke-width="0.35" xml:space="preserve">5:   4.8 %</text>
<text x="1149" y="586.7" fill="#ff0000" font-size="8" textLength="42" lengthAdjust="spacing" stroke="#ff0000" stroke-width="0.35" xml:space="preserve">1:  32.5 %</text>
<text x="1149" y="629.5" fill="#00ff00" font-size="8" textLength="42" lengthAdjust="spacing" stroke="#00ff00" stroke-width="0.35" xml:space="preserve">3:  23.5 %</text>
<text x="1149" y="665.8" fill="#00ffff" font-size="8" textLength="42" lengthAdjust="spacing" stroke="#00ffff" stroke-width="0.35" xml:space="preserve">4:  22.5 %</text>
<text x="1149" y="699.7" fill="#0000ff" font-size="8" textLength="42" lengthAdjust="spacing" stroke="#0000ff" stroke-width="0.35" xml:space="preserve">5:  21.6 %</text>
<line x1="99" y1="612.5" x2="321" y2="612.5" stroke="#ffff00" stroke-width="1" stroke-dasharray="3 3"/>
<line x1="99" y1="644.5" x2="321" y2="644.5" stroke="#ffff00" stroke-width="1" stroke-dasharray="3 3"/>
<line x1="99" y1="675.5" x2="321" y2="675.5" stroke="#ffff00" stroke-width="1" stroke-dasharray="3 3"/>
<line x1="99" y1="707.5" x2="321" y2="707.5" stroke="#ffff00" stroke-width="1" stroke-dasharray="3 3"/>
<line x1="99" y1="739.5" x2="321" y2="739.5" stroke="#ffff00" stroke-width="1" stroke-dasharray="3 3"/>
<line x1="99" y1="771.5" x2="321" y2="771.5" stroke="#ffff00" stroke-width="1" stroke-dasharray="3 3"/>
<line x1="99" y1="802.5" x2="321" y2="802.5" stroke="#ffff00" stroke-width="1" stroke-dasharray="3 3"/>
<line x1="99" y1="834.5" x2="321" y2="834.5" stroke="#ffff00" stroke-width="1" stroke-dasharray="3 3"/>
<line x1="127.5" y1="612" x2="127.5" y2="866" stroke="#ffff00" stroke-width="1" stroke-dasharray="3 3"/>
<line x1="154.5" y1="612" x2="154.5" y2="866" stroke="#ffff00" stroke-width="1" stroke-dasharray="3 3"/>
<line x1="182.5" y1="612" x2="182.5" y2="866" stroke="#ffff00" stroke-width="1" stroke-dasharray="3 3"/>
<line x1="209.5" y1="612" x2="209.5" y2="866" stroke="#ffff00" stroke-width="1" stroke-dasharray="3 3"/>
<line x1="237.5" y1="612" x2="237.5" y2="866" stroke="#ffff00" stroke-width="1" stroke-dasharray="3 3"/>
<line x1="265.5" y1="612" x2="265.5" y2="866" stroke="#ffff00" stroke-width="1" stroke-dasharray="3 3"/>
<line x1="292.5" y1="612" x2="292.5" y2="866" stroke="#ffff00" stroke-width="1" stroke-dasharray="3 3"/>
<line x1="320.5" y1="612" x2="320.5" y2="866" stroke="#ffff00" stroke-width="1" stroke-dasharray="3 3"/>
<line x1="99.5" y1="599" x2="99.5" y2="868" stroke="#ffff00" stroke-width="1"/>
<rect x="98" y="605" width="3" height="5" fill="#ffff00"/>
<line x1="97" y1="866.5" x2="332" y2="866.5" stroke="#ffff00" stroke-width="1"/>
<rect x="322" y="865" width="5" height="3" fill="#ffff00"/>
<line x1="97" y1="612.5" x2="99" y2="612.5" stroke="#ffff00" stroke-width="1"/>
<line x1="97" y1="644.5" x2="99" y2="644.5" stroke="#ffff00" stroke-width="1"/>
<line x1="97" y1="675.5" x2="99" y2="675.5" stroke="#ffff00" stroke-width="1"/>
<line x1="97" y1="707.5" x2="99" y2="707.5" stroke="#ffff00" stroke-width="1"/>
<line x1="97" y1="739.5" x2="99" y2="739.5" stroke="#ffff00" stroke-width="1"/>
<line x1="97" y1="771.5" x2="99" y2="771.5" stroke="#ffff00" stroke-width="1"/>
<line x1="97" y1="802.5" x2="99" y2="802.5" stroke="#ffff00" stroke-width="1"/>
<line x1="97" y1="834.5" x2="99" y2="834.5" stroke="#ffff00" stroke-width="1"/>
<line x1="97" y1="866.5" x2="99" y2="866.5" stroke="#ffff00" stroke-width="1"/>
<line x1="99.5" y1="866" x2="99.5" y2="869" stroke="#ffff00" stroke-width="1"/>
<line x1="127.5" y1="866" x2="127.5" y2="869" stroke="#ffff00" stroke-width="1"/>
<line x1="154.5" y1="866" x2="154.5" y2="869" stroke="#ffff00" stroke-width="1"/>
<line x1="182.5" y1="866" x2="182.5" y2="869" stroke="#ffff00" stroke-width="1"/>
<line x1="209.5" y1="866" x2="209.5" y2="869" stroke="#ffff00" stroke-width="1"/>
<line x1="237.5" y1="866" x2="237.5" y2="869" stroke="#ffff00" stroke-width="1"/>
<line x1="265.5" y1="866" x2="265.5" y2="869" stroke="#ffff00" stroke-width="1"/>
<line x1="292.5" y1="866" x2="292.5" y2="869" stroke="#ffff00" stroke-width="1"/>
<line x1="320.5" y1="866" x2="320.5" y2="869" stroke="#ffff00" stroke-width="1"/>
<line x1="296" y1="633.5" x2="314" y2="633.5" stroke="#ff0000" stroke-width="1"/>
<line x1="272" y1="633.5" x2="290" y2="633.5" stroke="#ff0000" stroke-width="1"/>
<line x1="248" y1="633.5" x2="266" y2="633.5" stroke="#ff0000" stroke-width="1"/>
<line x1="224" y1="633.5" x2="242" y2="633.5" stroke="#ff0000" stroke-width="1"/>
<line x1="200" y1="633.5" x2="218" y2="633.5" stroke="#ff0000" stroke-width="1"/>
<line x1="176" y1="633.5" x2="194" y2="633.5" stroke="#ff0000" stroke-width="1"/>
<line x1="152" y1="633.5" x2="170" y2="633.5" stroke="#ff0000" stroke-width="1"/>
<line x1="128" y1="633.5" x2="146" y2="633.5" stroke="#ff0000" stroke-width="1"/>
<line x1="104" y1="633.5" x2="122" y2="633.5" stroke="#ff0000" stroke-width="1"/>
<line x1="313.5" y1="848" x2="313.5" y2="866" stroke="#ff0000" stroke-width="1"/>
<line x1="313.5" y1="824" x2="313.5" y2="842" stroke="#ff0000" stroke-width="1"/>
<line x1="313.5" y1="800" x2="313.5" y2="818" stroke="#ff0000" stroke-width="1"/>
<line x1="313.5" y1="776" x2="313.5" y2="794" stroke="#ff0000" stroke-width="1"/>
<line x1="313.5" y1="752" x2="313.5" y2="770" stroke="#ff0000" stroke-width="1"/>
<line x1="313.5" y1="728" x2="313.5" y2="746" stroke="#ff0000" stroke-width="1"/>
<line x1="313.5" y1="704" x2="313.5" y2="722" stroke="#ff0000" stroke-width="1"/>
<line x1="313.5" y1="680" x2="313.5" y2="698" stroke="#ff0000" stroke-width="1"/>
<line x1="313.5" y1="656" x2="313.5" y2="674" stroke="#ff0000" stroke-width="1"/>
<line x1="313.5" y1="634" x2="313.5" y2="650" stroke="#ff0000" stroke-width="1"/>
<line x1="268" y1="663.5" x2="286" y2="663.5" stroke="#00ff00" stroke-width="1"/>
<line x1="244" y1="663.5" x2="262" y2="663.5" stroke="#00ff00" stroke-width="1"/>
<line x1="220" y1="663.5" x2="238" y2="663.5" stroke="#00ff00" stroke-width="1"/>
<line x1="196" y1="663.5" x2="214" y2="663.5" stroke="#00ff00" stroke-width="1"/>
<line x1="172" y1="663.5" x2="190" y2="663.5" stroke="#00ff00" stroke-width="1"/>
<line x1="148" y1="663.5" x2="166" y2="663.5" stroke="#00ff00" stroke-width="1"/>
<line x1="124" y1="663.5" x2="142" y2="663.5" stroke="#00ff00" stroke-width="1"/>
<line x1="101" y1="663.5" x2="118" y2="663.5" stroke="#00ff00" stroke-width="1"/>
<line x1="286.5" y1="848" x2="286.5" y2="866" stroke="#00ff00" stroke-width="1"/>
<line x1="286.5" y1="824" x2="286.5" y2="842" stroke="#00ff00" stroke-width="1"/>
<line x1="286.5" y1="800" x2="286.5" y2="818" stroke="#00ff00" stroke-width="1"/>
<line x1="286.5" y1="776" x2="286.5" y2="794" stroke="#00ff00" stroke-width="1"/>
<line x1="286.5" y1="752" x2="286.5" y2="770" stroke="#00ff00" stroke-width="1"/>
<line x1="286.5" y1="728" x2="286.5" y2="746" stroke="#00ff00" stroke-width="1"/>
<line x1="286.5" y1="704" x2="286.5" y2="722" stroke="#00ff00" stroke-width="1"/>
<line x1="286.5" y1="680" x2="286.5" y2="698" stroke="#00ff00" stroke-width="1"/>
<line x1="286.5" y1="664" x2="286.5" y2="674" stroke="#00ff00" stroke-width="1"/>
<line x1="228" y1="707.5" x2="246" y2="707.5" stroke="#ff00ff" stroke-width="1"/>
<line x1="204" y1="707.5" x2="222" y2="707.5" stroke="#ff00ff" stroke-width="1"/>
<line x1="180" y1="707.5" x2="198" y2="707.5" stroke="#ff00ff" stroke-width="1"/>
<line x1="156" y1="707.5" x2="174" y2="707.5" stroke="#ff00ff" stroke-width="1"/>
<line x1="132" y1="707.5" x2="150" y2="707.5" stroke="#ff00ff" stroke-width="1"/>
<line x1="108" y1="707.5" x2="126" y2="707.5" stroke="#ff00ff" stroke-width="1"/>
<line x1="99" y1="707.5" x2="102" y2="707.5" stroke="#ff00ff" stroke-width="1"/>
<line x1="245.5" y1="848" x2="245.5" y2="866" stroke="#ff00ff" stroke-width="1"/>
<line x1="245.5" y1="824" x2="245.5" y2="842" stroke="#ff00ff" stroke-width="1"/>
<line x1="245.5" y1="800" x2="245.5" y2="818" stroke="#ff00ff" stroke-width="1"/>
<line x1="245.5" y1="776" x2="245.5" y2="794" stroke="#ff00ff" stroke-width="1"/>
<line x1="245.5" y1="752" x2="245.5" y2="770" stroke="#ff00ff" stroke-width="1"/>
<line x1="245.5" y1="728" x2="245.5" y2="746" stroke="#ff00ff" stroke-width="1"/>
<line x1="245.5" y1="707" x2="245.5" y2="722" stroke="#ff00ff" stroke-width="1"/>
<line x1="169" y1="770.5" x2="187" y2="770.5" stroke="#00ffff" stroke-width="1"/>
<line x1="145" y1="770.5" x2="163" y2="770.5" stroke="#00ffff" stroke-width="1"/>
<line x1="121" y1="770.5" x2="139" y2="770.5" stroke="#00ffff" stroke-width="1"/>
<line x1="99" y1="770.5" x2="115" y2="770.5" stroke="#00ffff" stroke-width="1"/>
<line x1="187.5" y1="848" x2="187.5" y2="866" stroke="#00ffff" stroke-width="1"/>
<line x1="187.5" y1="824" x2="187.5" y2="842" stroke="#00ffff" stroke-width="1"/>
<line x1="187.5" y1="800" x2="187.5" y2="818" stroke="#00ffff" stroke-width="1"/>
<line x1="187.5" y1="776" x2="187.5" y2="794" stroke="#00ffff" stroke-width="1"/>
<line x1="156" y1="785.5" x2="174" y2="785.5" stroke="#0000ff" stroke-width="1"/>
<line x1="132" y1="785.5" x2="150" y2="785.5" stroke="#0000ff" stroke-width="1"/>
<line x1="108" y1="785.5" x2="126" y2="785.5" stroke="#0000ff" stroke-width="1"/>
<line x1="99" y1="785.5" x2="102" y2="785.5" stroke="#0000ff" stroke-width="1"/>
<line x1="174.5" y1="848" x2="174.5" y2="866" stroke="#0000ff" stroke-width="1"/>
<line x1="174.5" y1="824" x2="174.5" y2="842" stroke="#0000ff" stroke-width="1"/>
<line x1="174.5" y1="800" x2="174.5" y2="818" stroke="#0000ff" stroke-width="1"/>
<line x1="174.5" y1="785" x2="174.5" y2="794" stroke="#0000ff" stroke-width="1"/>
<line x1="245.5" y1="698" x2="245.5" y2="718" stroke="#ff00ff" stroke-width="1"/>
<line x1="243" y1="698.5" x2="248" y2="698.5" stroke="#ff00ff" stroke-width="1"/>
<line x1="243" y1="717.5" x2="248" y2="717.5" stroke="#ff00ff" stroke-width="1"/>
<line x1="187.5" y1="762" x2="187.5" y2="780" stroke="#00ffff" stroke-width="1"/>
<line x1="185" y1="762.5" x2="190" y2="762.5" stroke="#00ffff" stroke-width="1"/>
<line x1="185" y1="779.5" x2="190" y2="779.5" stroke="#00ffff" stroke-width="1"/>
<line x1="99.5" y1="866.5" x2="313.7" y2="633.7" stroke="#ff0000" stroke-width="3" stroke-linecap="butt"/>
<text x="138.2" y="603.6" fill="#00ff00" font-size="10.3" textLength="80.8" lengthAdjust="spacing" xml:space="preserve">Federkennlinie</text>
<text x="76.8" y="593.9" fill="#ffff00" font-size="7" textLength="17.4" lengthAdjust="spacing" stroke="#ffff00" stroke-width="0.35" xml:space="preserve">F [N]</text>
<text x="76.9" y="614.3" fill="#ffff00" font-size="7" textLength="11.68" lengthAdjust="spacingAndGlyphs" stroke="#ffff00" stroke-width="0.35" xml:space="preserve">800</text>
<text x="76.9" y="646.0" fill="#ffff00" font-size="7" textLength="11.68" lengthAdjust="spacingAndGlyphs" stroke="#ffff00" stroke-width="0.35" xml:space="preserve">700</text>
<text x="76.9" y="677.8" fill="#ffff00" font-size="7" textLength="11.68" lengthAdjust="spacingAndGlyphs" stroke="#ffff00" stroke-width="0.35" xml:space="preserve">600</text>
<text x="76.9" y="709.5" fill="#ffff00" font-size="7" textLength="11.68" lengthAdjust="spacingAndGlyphs" stroke="#ffff00" stroke-width="0.35" xml:space="preserve">500</text>
<text x="76.9" y="741.2" fill="#ffff00" font-size="7" textLength="11.68" lengthAdjust="spacingAndGlyphs" stroke="#ffff00" stroke-width="0.35" xml:space="preserve">400</text>
<text x="76.9" y="773.0" fill="#ffff00" font-size="7" textLength="11.68" lengthAdjust="spacingAndGlyphs" stroke="#ffff00" stroke-width="0.35" xml:space="preserve">300</text>
<text x="76.9" y="804.7" fill="#ffff00" font-size="7" textLength="11.68" lengthAdjust="spacingAndGlyphs" stroke="#ffff00" stroke-width="0.35" xml:space="preserve">200</text>
<text x="76.9" y="836.4" fill="#ffff00" font-size="7" textLength="11.68" lengthAdjust="spacingAndGlyphs" stroke="#ffff00" stroke-width="0.35" xml:space="preserve">100</text>
<text x="78" y="868.1" fill="#ffff00" font-size="7" textLength="3.89" lengthAdjust="spacingAndGlyphs" stroke="#ffff00" stroke-width="0.35" xml:space="preserve">0</text>
<text x="92.6" y="883.6" fill="#ffff00" font-size="7" textLength="3.89" lengthAdjust="spacingAndGlyphs" stroke="#ffff00" stroke-width="0.35" xml:space="preserve">0</text>
<text x="120.23" y="883.6" fill="#ffff00" font-size="7" textLength="7.79" lengthAdjust="spacingAndGlyphs" stroke="#ffff00" stroke-width="0.35" xml:space="preserve">10</text>
<text x="147.86" y="883.6" fill="#ffff00" font-size="7" textLength="7.79" lengthAdjust="spacingAndGlyphs" stroke="#ffff00" stroke-width="0.35" xml:space="preserve">20</text>
<text x="175.49" y="883.6" fill="#ffff00" font-size="7" textLength="7.79" lengthAdjust="spacingAndGlyphs" stroke="#ffff00" stroke-width="0.35" xml:space="preserve">30</text>
<text x="203.12" y="883.6" fill="#ffff00" font-size="7" textLength="7.79" lengthAdjust="spacingAndGlyphs" stroke="#ffff00" stroke-width="0.35" xml:space="preserve">40</text>
<text x="230.75" y="883.6" fill="#ffff00" font-size="7" textLength="7.79" lengthAdjust="spacingAndGlyphs" stroke="#ffff00" stroke-width="0.35" xml:space="preserve">50</text>
<text x="258.38" y="883.6" fill="#ffff00" font-size="7" textLength="7.79" lengthAdjust="spacingAndGlyphs" stroke="#ffff00" stroke-width="0.35" xml:space="preserve">60</text>
<text x="286.01" y="883.6" fill="#ffff00" font-size="7" textLength="7.79" lengthAdjust="spacingAndGlyphs" stroke="#ffff00" stroke-width="0.35" xml:space="preserve">70</text>
<text x="313.64" y="883.6" fill="#ffff00" font-size="7" textLength="7.79" lengthAdjust="spacingAndGlyphs" stroke="#ffff00" stroke-width="0.35" xml:space="preserve">80</text>
<text x="335.5" y="883.6" fill="#ffff00" font-size="7" textLength="21.5" lengthAdjust="spacing" stroke="#ffff00" stroke-width="0.35" xml:space="preserve">s[mm]</text>
<text x="229.1" y="630.8" fill="#ff0000" font-size="7.5" textLength="8.33" lengthAdjust="spacingAndGlyphs" stroke="#ff0000" stroke-width="0.35" xml:space="preserve">Fc</text>
<text x="185.9" y="660.7" fill="#00ff00" font-size="7.5" textLength="8.75" lengthAdjust="spacingAndGlyphs" stroke="#00ff00" stroke-width="0.35" xml:space="preserve">Fn</text>
<text x="122.1" y="704.4" fill="#ff00ff" font-size="7.5" textLength="8.75" lengthAdjust="spacingAndGlyphs" stroke="#ff00ff" stroke-width="0.35" xml:space="preserve">F2</text>
<text x="103.9" y="767.3" fill="#00ffff" font-size="7.5" textLength="8.75" lengthAdjust="spacingAndGlyphs" stroke="#00ffff" stroke-width="0.35" xml:space="preserve">F1</text>
<text x="101.9" y="782.5" fill="#0000ff" font-size="7.5" textLength="8.33" lengthAdjust="spacingAndGlyphs" stroke="#0000ff" stroke-width="0.35" xml:space="preserve">Fk</text>
<line x1="405" y1="612.5" x2="627" y2="612.5" stroke="#ffff00" stroke-width="1" stroke-dasharray="3 3"/>
<line x1="405" y1="663.5" x2="627" y2="663.5" stroke="#ffff00" stroke-width="1" stroke-dasharray="3 3"/>
<line x1="405" y1="714.5" x2="627" y2="714.5" stroke="#ffff00" stroke-width="1" stroke-dasharray="3 3"/>
<line x1="405" y1="764.5" x2="627" y2="764.5" stroke="#ffff00" stroke-width="1" stroke-dasharray="3 3"/>
<line x1="405" y1="815.5" x2="627" y2="815.5" stroke="#ffff00" stroke-width="1" stroke-dasharray="3 3"/>
<line x1="449.5" y1="612" x2="449.5" y2="866" stroke="#ffff00" stroke-width="1" stroke-dasharray="3 3"/>
<line x1="493.5" y1="612" x2="493.5" y2="866" stroke="#ffff00" stroke-width="1" stroke-dasharray="3 3"/>
<line x1="537.5" y1="612" x2="537.5" y2="866" stroke="#ffff00" stroke-width="1" stroke-dasharray="3 3"/>
<line x1="581.5" y1="612" x2="581.5" y2="866" stroke="#ffff00" stroke-width="1" stroke-dasharray="3 3"/>
<line x1="626.5" y1="612" x2="626.5" y2="866" stroke="#ffff00" stroke-width="1" stroke-dasharray="3 3"/>
<line x1="405.5" y1="599" x2="405.5" y2="868" stroke="#ffff00" stroke-width="1"/>
<rect x="404" y="605" width="3" height="5" fill="#ffff00"/>
<line x1="403" y1="866.5" x2="638" y2="866.5" stroke="#ffff00" stroke-width="1"/>
<rect x="628" y="865" width="5" height="3" fill="#ffff00"/>
<line x1="403" y1="612.5" x2="405" y2="612.5" stroke="#ffff00" stroke-width="1"/>
<line x1="403" y1="663.5" x2="405" y2="663.5" stroke="#ffff00" stroke-width="1"/>
<line x1="403" y1="714.5" x2="405" y2="714.5" stroke="#ffff00" stroke-width="1"/>
<line x1="403" y1="764.5" x2="405" y2="764.5" stroke="#ffff00" stroke-width="1"/>
<line x1="403" y1="815.5" x2="405" y2="815.5" stroke="#ffff00" stroke-width="1"/>
<line x1="403" y1="866.5" x2="405" y2="866.5" stroke="#ffff00" stroke-width="1"/>
<line x1="405.5" y1="866" x2="405.5" y2="869" stroke="#ffff00" stroke-width="1"/>
<line x1="449.5" y1="866" x2="449.5" y2="869" stroke="#ffff00" stroke-width="1"/>
<line x1="493.5" y1="866" x2="493.5" y2="869" stroke="#ffff00" stroke-width="1"/>
<line x1="537.5" y1="866" x2="537.5" y2="869" stroke="#ffff00" stroke-width="1"/>
<line x1="581.5" y1="866" x2="581.5" y2="869" stroke="#ffff00" stroke-width="1"/>
<line x1="626.5" y1="866" x2="626.5" y2="869" stroke="#ffff00" stroke-width="1"/>
<line x1="488.5" y1="701" x2="488.5" y2="866" stroke="#ffff00" stroke-width="1"/>
<path d="M462.34 612.50 L462.34 655.52 L462.34 655.80 L462.34 656.19 L462.34 656.64 L462.34 657.12 L462.34 657.64 L462.35 658.18 L462.35 658.74 L462.35 659.33 L462.35 659.93 L462.36 660.56 L462.36 661.19 L462.37 661.84 L462.37 662.51 L462.38 663.19 L462.39 663.88 L462.39 664.58 L462.40 665.29 L462.41 666.02 L462.42 666.75 L462.43 667.49 L462.45 668.24 L462.46 669.00 L462.47 669.77 L462.49 670.54 L462.50 671.33 L462.52 672.12 L462.54 672.92 L462.55 673.72 L462.57 674.53 L462.59 675.35 L462.62 676.18 L462.64 677.01 L462.66 677.84 L462.69 678.68 L462.71 679.53 L462.74 680.38 L462.77 681.24 L462.80 682.10 L462.83 682.97 L462.86 683.84 L462.89 684.71 L462.93 685.59 L462.96 686.47 L463.00 687.36 L463.04 688.25 L463.08 689.15 L463.12 690.05 L463.16 690.95 L463.20 691.85 L463.25 692.76 L463.29 693.67 L463.34 694.58 L463.39 695.50 L463.44 696.42 L463.49 697.34 L463.55 698.26 L463.60 699.19 L463.66 700.12 L463.71 701.05 L463.77 701.98 L463.83 702.91 L463.89 703.85 L463.96 704.78 L464.02 705.72 L464.09 706.66 L464.16 707.60 L464.23 708.54 L464.30 709.48 L464.37 710.43 L464.44 711.37 L464.52 712.32 L464.60 713.26 L464.68 714.21 L464.76 715.15 L464.84 716.10 L464.92 717.05 L465.01 717.99 L465.10 718.94 L465.19 719.88 L465.28 720.83 L465.37 721.78 L465.47 722.72 L465.56 723.67 L465.66 724.61 L465.76 725.55 L465.86 726.50 L465.96 727.44 L466.07 728.38 L466.18 729.32 L466.28 730.26 L466.39 731.20 L466.51 732.13 L466.62 733.07 L466.74 734.00 L466.85 734.93 L466.97 735.86 L467.10 736.79 L467.22 737.72 L467.34 738.64 L467.47 739.57 L467.60 740.49 L467.73 741.41 L467.87 742.32 L468.00 743.24 L468.14 744.15 L468.28 745.06 L468.42 745.97 L468.56 746.87 L468.70 747.78 L468.85 748.68 L469.00 749.57 L469.15 750.47 L469.30 751.36 L469.46 752.25 L469.62 753.13 L469.78 754.02 L469.94 754.89 L470.10 755.77 L470.27 756.64 L470.43 757.51 L470.60 758.38 L470.78 759.24 L470.95 760.10 L471.13 760.96 L471.30 761.81 L471.48 762.66 L471.67 763.51 L471.85 764.35 L472.04 765.19 L472.23 766.02 L472.42 766.85 L472.61 767.68 L472.81 768.50 L473.00 769.32 L473.20 770.14 L473.41 770.95 L473.61 771.76 L473.82 772.56 L474.03 773.36 L474.24 774.15 L474.45 774.95 L474.67 775.73 L474.89 776.51 L475.11 777.29 L475.33 778.07 L475.55 778.84 L475.78 779.60 L476.01 780.36 L476.24 781.12 L476.48 781.87 L476.71 782.62 L476.95 783.36 L477.20 784.10 L477.44 784.84 L477.69 785.57 L477.93 786.29 L478.19 787.01 L478.44 787.73 L478.70 788.44 L478.95 789.15 L479.21 789.85 L479.48 790.55 L479.74 791.24 L480.01 791.93 L480.28 792.61 L480.55 793.29 L480.83 793.97 L481.11 794.64 L481.39 795.30 L481.67 795.97 L481.96 796.62 L482.25 797.27 L482.54 797.92 L482.83 798.56 L483.12 799.20 L483.42 799.83 L483.72 800.46 L484.03 801.09 L484.33 801.71 L484.64 802.32 L484.95 802.93 L485.27 803.53 L485.58 804.14 L485.90 804.73 L486.22 805.32 L486.55 805.91 L486.87 806.49 L487.20 807.07 L487.53 807.64 L487.87 808.21 L488.21 808.77 L488.55 809.33 L488.89 809.89 L489.23 810.44 L489.58 810.98 L489.93 811.53 L490.29 812.06 L490.64 812.59 L491.00 813.12 L491.36 813.65 L491.73 814.16 L492.09 814.68 L492.46 815.19 L492.83 815.70 L493.21 816.20 L493.59 816.69 L493.97 817.19 L494.35 817.68 L494.74 818.16 L495.13 818.64 L495.52 819.12 L495.91 819.59 L496.31 820.06 L496.71 820.52 L497.11 820.98 L497.52 821.43 L497.93 821.88 L498.34 822.33 L498.75 822.77 L499.17 823.21 L499.59 823.65 L500.01 824.08 L500.44 824.50 L500.87 824.93 L501.30 825.35 L501.73 825.76 L502.17 826.17 L502.61 826.58 L503.05 826.98 L503.50 827.38 L503.95 827.78 L504.40 828.17 L504.85 828.56 L505.31 828.94 L505.77 829.32 L506.23 829.70 L506.70 830.08 L507.17 830.45 L507.64 830.81 L508.12 831.18 L508.60 831.54 L509.08 831.89 L509.56 832.24 L510.05 832.59 L510.54 832.94 L511.03 833.28 L511.53 833.62 L512.03 833.96 L512.53 834.29 L513.04 834.62 L513.54 834.94 L514.06 835.26 L514.57 835.58 L515.09 835.90 L515.61 836.21 L516.13 836.52 L516.66 836.83 L517.19 837.13 L517.72 837.43 L518.26 837.73 L518.80 838.03 L519.34 838.32 L519.89 838.61 L520.43 838.89 L520.99 839.17 L521.54 839.45 L522.10 839.73 L522.66 840.01 L523.22 840.28 L523.79 840.55 L524.36 840.81 L524.94 841.07 L525.51 841.33 L526.09 841.59 L526.68 841.85 L527.26 842.10 L527.85 842.35 L528.45 842.60 L529.04 842.84 L529.64 843.08 L530.24 843.32 L530.85 843.56 L531.46 843.79 L532.07 844.03 L532.69 844.26 L533.30 844.48 L533.93 844.71 L534.55 844.93 L535.18 845.15 L535.81 845.37 L536.45 845.59 L537.08 845.80 L537.73 846.01 L538.37 846.22 L539.02 846.43 L539.67 846.63 L540.33 846.83 L540.98 847.03 L541.64 847.23 L542.31 847.43 L542.98 847.62 L543.65 847.81 L544.32 848.00 L545.00 848.19 L545.68 848.38 L546.37 848.56 L547.06 848.74 L547.75 848.92 L548.44 849.10 L549.14 849.28 L549.84 849.45 L550.55 849.62 L551.26 849.80 L551.97 849.96 L552.68 850.13 L553.40 850.30 L554.12 850.46 L554.85 850.62 L555.58 850.78 L556.31 850.94 L557.05 851.10 L557.79 851.25 L558.53 851.41 L559.28 851.56 L560.03 851.71 L560.78 851.86 L561.53 852.00 L562.30 852.15 L563.06 852.29 L563.83 852.43 L564.60 852.57 L565.37 852.71 L566.15 852.85 L566.93 852.99 L567.71 853.12 L568.50 853.26 L569.29 853.39 L570.09 853.52 L570.89 853.65 L571.69 853.78 L572.50 853.90 L573.30 854.03 L574.12 854.15 L574.93 854.27 L575.75 854.39 L576.58 854.51 L577.40 854.63 L578.24 854.75 L579.07 854.87 L579.91 854.98 L580.75 855.09 L581.59 855.21 L582.44 855.32 L583.30 855.43 L584.15 855.54 L585.01 855.64 L585.87 855.75 L586.74 855.86 L587.61 855.96 L588.49 856.06 L589.36 856.16 L590.25 856.27 L591.13 856.37 L592.02 856.46 L592.91 856.56 L593.81 856.66 L594.71 856.75 L595.61 856.85 L596.52 856.94 L597.43 857.03 L598.34 857.13 L599.26 857.22 L600.18 857.31 L601.11 857.40 L602.04 857.48 L602.97 857.57 L603.91 857.66 L604.85 857.74 L605.80 857.83 L606.74 857.91 L607.70 857.99 L608.65 858.07 L609.61 858.15 L610.57 858.23 L611.54 858.31 L612.51 858.39 L613.49 858.47 L614.46 858.54 L615.45 858.62 L616.43 858.69 L617.42 858.77 L618.41 858.84 L619.41 858.91 L620.41 858.99 L621.42 859.06 L622.43 859.13 L623.44 859.20 L624.46 859.27 L625.48 859.33 L626.50 859.40" fill="none" stroke="#ff0000" stroke-width="3" stroke-linejoin="round" shape-rendering="crispEdges"/>
<path d="M486.5 701.3 l1.5 -1.5 l1.5 1.5 l-1.5 1.5 z" fill="none" stroke="#ff0000" stroke-width="1"/>
<path d="M486.5 722.5 l1.5 -1.5 l1.5 1.5 l-1.5 1.5 z" fill="none" stroke="#00ff00" stroke-width="1"/>
<path d="M486.5 753.5 l1.5 -1.5 l1.5 1.5 l-1.5 1.5 z" fill="none" stroke="#ff00ff" stroke-width="1"/>
<path d="M486.5 798 l1.5 -1.5 l1.5 1.5 l-1.5 1.5 z" fill="none" stroke="#00ffff" stroke-width="1"/>
<path d="M486.5 808 l1.5 -1.5 l1.5 1.5 l-1.5 1.5 z" fill="none" stroke="#0000ff" stroke-width="1"/>
<text x="449.2" y="603.8" fill="#00ff00" font-size="10.3" textLength="84.7" lengthAdjust="spacing" xml:space="preserve">Knickdiagramm</text>
<text x="383.2" y="593.2" fill="#ffff00" font-size="6.5" textLength="13.8" lengthAdjust="spacing" stroke="#ffff00" stroke-width="0.35" xml:space="preserve">s/L0</text>
<text x="383.3" y="614.1" fill="#ffff00" font-size="7" textLength="3.7" lengthAdjust="spacingAndGlyphs" stroke="#ffff00" stroke-width="0.35" xml:space="preserve">1</text>
<text x="383.3" y="664.9" fill="#ffff00" font-size="7" textLength="9.24" lengthAdjust="spacingAndGlyphs" stroke="#ffff00" stroke-width="0.35" xml:space="preserve">0.8</text>
<text x="383.3" y="715.7" fill="#ffff00" font-size="7" textLength="9.24" lengthAdjust="spacingAndGlyphs" stroke="#ffff00" stroke-width="0.35" xml:space="preserve">0.6</text>
<text x="383.3" y="766.5" fill="#ffff00" font-size="7" textLength="9.24" lengthAdjust="spacingAndGlyphs" stroke="#ffff00" stroke-width="0.35" xml:space="preserve">0.4</text>
<text x="383.3" y="817.3" fill="#ffff00" font-size="7" textLength="9.24" lengthAdjust="spacingAndGlyphs" stroke="#ffff00" stroke-width="0.35" xml:space="preserve">0.2</text>
<text x="383.3" y="868.1" fill="#ffff00" font-size="7" textLength="3.7" lengthAdjust="spacingAndGlyphs" stroke="#ffff00" stroke-width="0.35" xml:space="preserve">0</text>
<text x="398.2" y="883.8" fill="#ffff00" font-size="7" textLength="3.89" lengthAdjust="spacingAndGlyphs" stroke="#ffff00" stroke-width="0.35" xml:space="preserve">0</text>
<text x="442.4" y="883.8" fill="#ffff00" font-size="7" textLength="3.89" lengthAdjust="spacingAndGlyphs" stroke="#ffff00" stroke-width="0.35" xml:space="preserve">2</text>
<text x="486.6" y="883.8" fill="#ffff00" font-size="7" textLength="3.89" lengthAdjust="spacingAndGlyphs" stroke="#ffff00" stroke-width="0.35" xml:space="preserve">4</text>
<text x="530.8" y="883.8" fill="#ffff00" font-size="7" textLength="3.89" lengthAdjust="spacingAndGlyphs" stroke="#ffff00" stroke-width="0.35" xml:space="preserve">6</text>
<text x="575.0" y="883.8" fill="#ffff00" font-size="7" textLength="3.89" lengthAdjust="spacingAndGlyphs" stroke="#ffff00" stroke-width="0.35" xml:space="preserve">8</text>
<text x="619.2" y="883.8" fill="#ffff00" font-size="7" textLength="7.79" lengthAdjust="spacingAndGlyphs" stroke="#ffff00" stroke-width="0.35" xml:space="preserve">10</text>
<text x="639.7" y="883.8" fill="#ffff00" font-size="7" textLength="22.2" lengthAdjust="spacing" stroke="#ffff00" stroke-width="0.35" xml:space="preserve">v*L0/D</text>
<text x="495" y="701.6" fill="#ff0000" font-size="12" textLength="13" lengthAdjust="spacing" xml:space="preserve">sc</text>
<text x="495" y="722.6" fill="#00ff00" font-size="12" textLength="13" lengthAdjust="spacing" xml:space="preserve">sn</text>
<text x="495" y="754.6" fill="#ff00ff" font-size="12" textLength="13" lengthAdjust="spacing" xml:space="preserve">s2</text>
<text x="495" y="798.7" fill="#00ffff" font-size="12" textLength="12.5" lengthAdjust="spacingAndGlyphs" xml:space="preserve">s1</text>
<text x="495" y="808.7" fill="#0000ff" font-size="12" textLength="13" lengthAdjust="spacing" xml:space="preserve">sk</text>
<text x="515.9" y="713.9" fill="#ff0000" font-size="13" textLength="69" lengthAdjust="spacingAndGlyphs" xml:space="preserve">Knickgefahr</text>
<text x="410" y="840.9" fill="#00ff00" font-size="13" textLength="89" lengthAdjust="spacingAndGlyphs" xml:space="preserve">Knicksicherheit</text>
<rect x="701" y="817" width="3" height="77" fill="#ff0000"/>
<rect x="701" y="817" width="530" height="3" fill="#ff0000"/>
<line x1="704" y1="843.5" x2="1230" y2="843.5" stroke="#ffff00" stroke-width="1"/>
<line x1="794" y1="869.5" x2="920" y2="869.5" stroke="#ffff00" stroke-width="1"/>
<line x1="1078" y1="869.5" x2="1230" y2="869.5" stroke="#ffff00" stroke-width="1"/>
<line x1="793.5" y1="820" x2="793.5" y2="896" stroke="#ffff00" stroke-width="1"/>
<line x1="920.5" y1="820" x2="920.5" y2="896" stroke="#ffff00" stroke-width="1"/>
<line x1="1099.5" y1="820" x2="1099.5" y2="844" stroke="#ffff00" stroke-width="1"/>
<line x1="1078.5" y1="844" x2="1078.5" y2="896" stroke="#ffff00" stroke-width="1"/>
<line x1="1102.5" y1="870" x2="1102.5" y2="896" stroke="#ffff00" stroke-width="1"/>
<line x1="1173.5" y1="870" x2="1173.5" y2="896" stroke="#ffff00" stroke-width="1"/>
<line x1="1202.5" y1="870" x2="1202.5" y2="896" stroke="#ffff00" stroke-width="1"/>
<text x="706" y="826" fill="#ffff00" font-size="5.5" textLength="42" lengthAdjust="spacing" stroke="#ffff00" stroke-width="0.35" xml:space="preserve">Verantwortl. Abt.</text>
<text x="797" y="826" fill="#ffff00" font-size="5.5" textLength="52" lengthAdjust="spacingAndGlyphs" stroke="#ffff00" stroke-width="0.35" xml:space="preserve">Technische Referenz</text>
<text x="923" y="826" fill="#ffff00" font-size="5.5" textLength="38" lengthAdjust="spacingAndGlyphs" stroke="#ffff00" stroke-width="0.35" xml:space="preserve">Dokumentenart</text>
<text x="1102" y="826" fill="#ffff00" font-size="5.5" textLength="48" lengthAdjust="spacing" stroke="#ffff00" stroke-width="0.35" xml:space="preserve">Dokumentenstatus</text>
<text x="796.5" y="851" fill="#ffff00" font-size="5.5" textLength="33.5" lengthAdjust="spacing" stroke="#ffff00" stroke-width="0.35" xml:space="preserve">Erstellt durch</text>
<text x="924" y="851" fill="#ffff00" font-size="5.5" textLength="59" lengthAdjust="spacing" stroke="#ffff00" stroke-width="0.35" xml:space="preserve">Titel, Zusätzlicher Titel</text>
<text x="797" y="876" fill="#ffff00" font-size="5.5" textLength="38" lengthAdjust="spacingAndGlyphs" stroke="#ffff00" stroke-width="0.35" xml:space="preserve">Genehmigt von</text>
<text x="1081" y="876" fill="#ffff00" font-size="5.5" textLength="11" lengthAdjust="spacingAndGlyphs" stroke="#ffff00" stroke-width="0.35" xml:space="preserve">Änd.</text>
<text x="1105" y="876" fill="#ffff00" font-size="5.5" textLength="38" lengthAdjust="spacing" stroke="#ffff00" stroke-width="0.35" xml:space="preserve">Ausgabedatum</text>
<text x="1177" y="876" fill="#ffff00" font-size="5.5" textLength="9" lengthAdjust="spacingAndGlyphs" stroke="#ffff00" stroke-width="0.35" xml:space="preserve">Spr.</text>
<text x="1205" y="876" fill="#ffff00" font-size="5.5" textLength="11" lengthAdjust="spacingAndGlyphs" stroke="#ffff00" stroke-width="0.35" xml:space="preserve">Blatt</text>
<text x="927" y="866.7" fill="#ff0000" font-size="14" textLength="69" lengthAdjust="spacingAndGlyphs" xml:space="preserve">Druckfeder</text>
<text x="1085" y="860.7" fill="#ff0000" font-size="14" textLength="98" lengthAdjust="spacingAndGlyphs" xml:space="preserve">2098-4x32x120</text>
<text x="1084.5" y="887.5" fill="#00ff00" font-size="8" stroke="#00ff00" stroke-width="0.35" xml:space="preserve">A</text>
<text x="1108" y="887.5" fill="#00ff00" font-size="8" textLength="38" lengthAdjust="spacingAndGlyphs" stroke="#00ff00" stroke-width="0.35" xml:space="preserve">2013-04-29</text>
</svg>
</body></html>
